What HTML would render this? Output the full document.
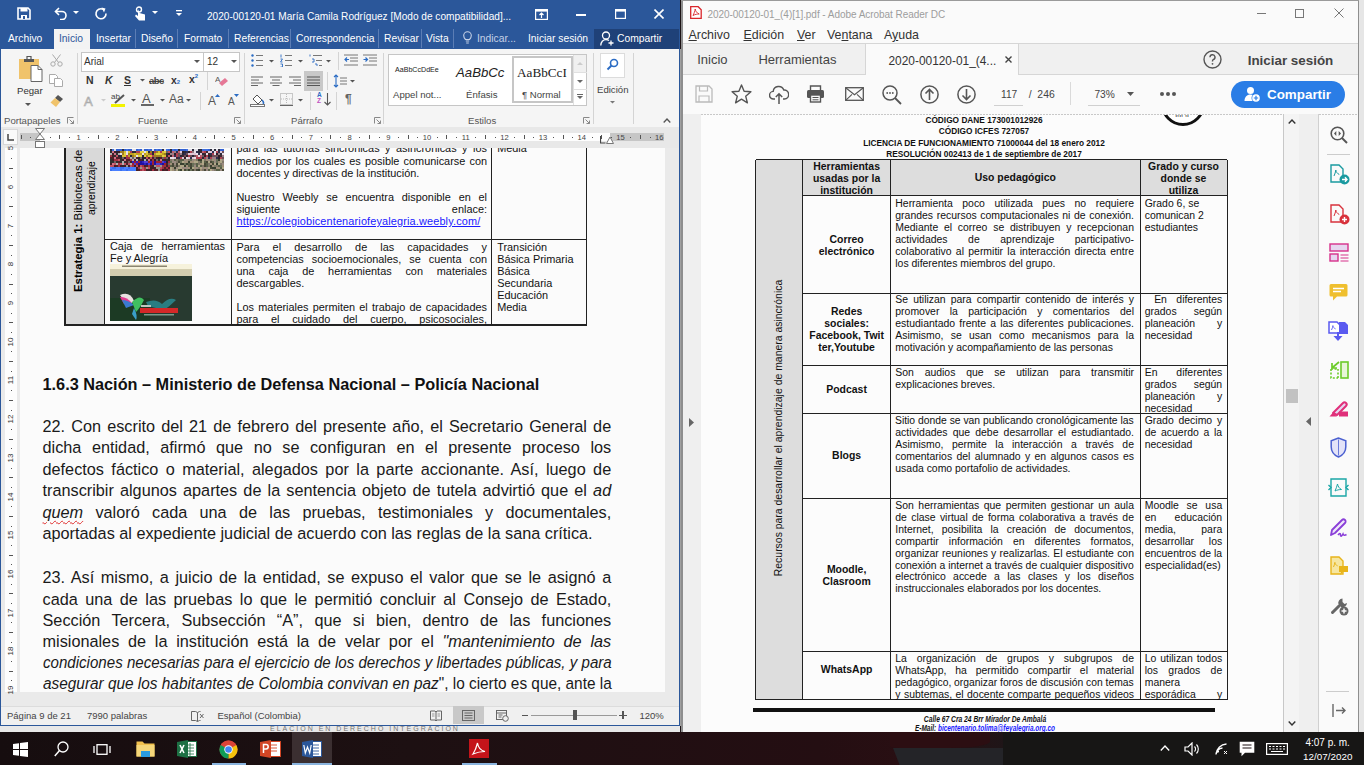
<!DOCTYPE html>
<html><head><meta charset="utf-8">
<style>
*{margin:0;padding:0;box-sizing:border-box}
html,body{width:1364px;height:765px;overflow:hidden;background:#1b1214;font-family:"Liberation Sans",sans-serif}
.a{position:absolute}
.t{position:absolute;white-space:nowrap}
#word{left:0;top:0;width:680px;height:726px;background:#f3f3f3;overflow:hidden}
#wtitle{left:0;top:0;width:680px;height:49px;background:#2b579a}
#ribbon{left:1px;top:49px;width:678px;height:78px;background:#f5f5f5}
#ruler{left:1px;top:127px;width:678px;height:21px;background:#e8e8e8}
#docarea{left:1px;top:148px;width:678px;height:559px;background:#eaeaea;overflow:hidden}
#page{left:19px;top:0;width:645px;height:544px;background:#fbfbfb;overflow:hidden}
#status{left:1px;top:707px;width:678px;height:18px;background:#f0f0f0;font-size:11px;color:#444}
#acro{left:683px;top:0;width:681px;height:732px;background:#fafafa;overflow:hidden}
#taskbar{left:0;top:732px;width:1364px;height:33px;background:#1d1315}
.tab{position:absolute;top:28px;height:20px;font-size:10.3px;color:#fff;line-height:21px;white-space:nowrap}
.sep{position:absolute;width:1px;background:#d4d4d4}
.gl{position:absolute;font-size:11px;color:#555;white-space:nowrap;top:63px}
</style></head><body>

<!-- ================= WORD ================= -->
<div id="word" class="a">
  <div id="wtitle" class="a">
    <div class="t" style="left:207px;top:10.5px;font-size:10.1px;color:#fff">2020-00120-01 María Camila Rodríguez [Modo de compatibilidad]...</div>
    <!-- QAT -->
    <svg class="a" style="left:17px;top:7px" width="14" height="13" viewBox="0 0 14 13"><path d="M1 1h10l2 2v9H1z" fill="none" stroke="#fff" stroke-width="1.6"/><rect x="3.5" y="1" width="7" height="3.5" fill="#fff"/><rect x="4" y="8" width="6" height="4" fill="#fff"/><rect x="6" y="9" width="2" height="3" fill="#2b579a"/></svg>
    <svg class="a" style="left:54px;top:7px" width="14" height="13" viewBox="0 0 14 13"><path d="M5 1L1.5 4.5 5 8" fill="none" stroke="#fff" stroke-width="1.6"/><path d="M2 4.5h6a4 4 0 0 1 0 8h-2" fill="none" stroke="#fff" stroke-width="1.6"/></svg>
    <svg class="a" style="left:73px;top:11px" width="6" height="4"><path d="M0 0h6L3 3z" fill="#fff"/></svg>
    <svg class="a" style="left:94px;top:7px" width="14" height="13" viewBox="0 0 14 13"><path d="M9 2.2A5 5 0 1 0 12 6.5" fill="none" stroke="#fff" stroke-width="1.6"/><path d="M7.5 0.5L11.5 1.5 10 5.5z" fill="#fff"/></svg>
    <svg class="a" style="left:134px;top:6px" width="12" height="15" viewBox="0 0 12 15"><circle cx="5" cy="3.5" r="2.5" fill="none" stroke="#fff" stroke-width="1.4"/><path d="M4 3v7l-2-1.5L1 10l4 4.5h6V8.5L5.5 7" fill="#fff"/></svg>
    <svg class="a" style="left:152px;top:11px" width="6" height="4"><path d="M0 0h6L3 3z" fill="#fff"/></svg>
    <svg class="a" style="left:176px;top:10px" width="6" height="7"><rect x="0" y="0" width="6" height="1.3" fill="#fff"/><path d="M0 3h6L3 6z" fill="#fff"/></svg>
    <!-- window controls -->
    <svg class="a" style="left:535px;top:9px" width="13" height="11" viewBox="0 0 13 11"><rect x="0.6" y="0.6" width="11.8" height="9.8" fill="none" stroke="#fff" stroke-width="1.2"/><rect x="0.6" y="0.6" width="11.8" height="2" fill="#fff"/><path d="M6.5 4v5M4.5 6l2-2 2 2" fill="none" stroke="#fff" stroke-width="1.2"/></svg>
    <div class="a" style="left:576px;top:14px;width:10px;height:1.5px;background:#fff"></div>
    <svg class="a" style="left:615px;top:9px" width="11" height="10" viewBox="0 0 11 10"><rect x="0.6" y="0.6" width="9.8" height="8.8" fill="none" stroke="#fff" stroke-width="1.2"/><rect x="0.6" y="0.6" width="9.8" height="2" fill="#fff"/></svg>
    <svg class="a" style="left:654px;top:9px" width="10" height="10" viewBox="0 0 10 10"><path d="M0.5 0.5l9 9M9.5 0.5l-9 9" stroke="#fff" stroke-width="1.6"/></svg>
    <!-- tabs -->
    <div class="tab" style="left:8px">Archivo</div>
    <div class="a" style="left:54px;top:29px;width:36px;height:20px;background:#f3f3f3"></div>
    <div class="tab" style="left:59px;color:#2b579a">Inicio</div>
    <div class="tab" style="left:96px">Insertar</div>
    <div class="tab" style="left:141px">Diseño</div>
    <div class="tab" style="left:184px">Formato</div>
    <div class="tab" style="left:234px">Referencias</div>
    <div class="tab" style="left:296px">Correspondencia</div>
    <div class="tab" style="left:384px">Revisar</div>
    <div class="tab" style="left:426px">Vista</div>
    <div class="a" style="left:135px;top:29px;width:1px;height:19px;background:#5b7db5"></div>
    <div class="a" style="left:177px;top:29px;width:1px;height:19px;background:#5b7db5"></div>
    <div class="a" style="left:228px;top:29px;width:1px;height:19px;background:#5b7db5"></div>
    <div class="a" style="left:290px;top:29px;width:1px;height:19px;background:#5b7db5"></div>
    <div class="a" style="left:378px;top:29px;width:1px;height:19px;background:#5b7db5"></div>
    <div class="a" style="left:421px;top:29px;width:1px;height:19px;background:#5b7db5"></div>
    <div class="a" style="left:453px;top:29px;width:1px;height:19px;background:#5b7db5"></div>
    <svg class="a" style="left:463px;top:31px" width="9" height="13" viewBox="0 0 9 13"><path d="M2.5 8.5C1 7 0.7 6 0.7 4.5a3.8 3.8 0 0 1 7.6 0c0 1.5-0.3 2.5-1.8 4z M2.8 10h3.4M3.2 12h2.6" fill="none" stroke="#c5d1e6" stroke-width="1.1"/></svg>
    <div class="tab" style="left:477px;color:#c5d1e6">Indicar...</div>
    <div class="tab" style="left:528px">Iniciar sesión</div>
    <div class="a" style="left:594px;top:29px;width:86px;height:20px;background:#1f4178"></div>
    <svg class="a" style="left:600px;top:31px" width="14" height="15" viewBox="0 0 14 15"><circle cx="6" cy="4.5" r="3.5" fill="none" stroke="#fff" stroke-width="1.3"/><path d="M0.8 14.5c0-3.5 2.2-5.8 5.2-5.8 1.2 0 2.2 0.3 3 0.9" fill="none" stroke="#fff" stroke-width="1.3"/><path d="M11 9.5v5M8.5 12h5" stroke="#fff" stroke-width="1.3"/></svg>
    <div class="tab" style="left:617px">Compartir</div>
  </div>
  <div class="a" style="left:0;top:0;width:1px;height:726px;background:#2b579a"></div>
  <div class="a" style="left:679px;top:0;width:1px;height:726px;background:#2b579a"></div>
  <div class="a" style="left:0;top:725px;width:680px;height:1px;background:#2b579a"></div>
  <div id="ribbon" class="a">
    <!-- offsets: ribbon left=1 top=49 -->
    <div style="position:absolute;left:-1px;top:-49px">
    <!-- Portapapeles -->
    <svg class="a" style="left:18px;top:55px" width="26" height="28" viewBox="0 0 26 28"><rect x="1" y="4" width="20" height="20" fill="#f0c36b"/><path d="M6 4h10v3H6z" fill="#555"/><path d="M9 1.5h4v3H9z" fill="none" stroke="#555" stroke-width="1.2"/><path d="M13 10.5h7l4 4V26.5H13z" fill="#fff" stroke="#666" stroke-width="1"/><path d="M20 10.5v4h4" fill="none" stroke="#666" stroke-width="1"/></svg>
    <div class="t" style="left:17px;top:85px;font-size:9.6px;color:#333">Pegar</div>
    <svg class="a" style="left:25px;top:103px" width="6" height="4"><path d="M0 0h6L3 3z" fill="#555"/></svg>
    <svg class="a" style="left:50px;top:54px" width="13" height="13" viewBox="0 0 13 13"><path d="M2.5 0.5l6 8M10.5 0.5l-6 8" stroke="#aaa" stroke-width="1"/><circle cx="3" cy="10" r="2.2" fill="none" stroke="#aaa"/><circle cx="10" cy="10" r="2.2" fill="none" stroke="#aaa"/></svg>
    <svg class="a" style="left:49px;top:74px" width="14" height="13" viewBox="0 0 14 13"><path d="M0.5 0.5h6l2 2v7h-8z" fill="#fff" stroke="#aaa"/><path d="M5.5 4.5h6l2 2v6h-8z" fill="#fff" stroke="#aaa"/></svg>
    <svg class="a" style="left:50px;top:94px" width="14" height="13" viewBox="0 0 14 13"><path d="M8 1l5 4-3 3-5-4z" fill="#555"/><path d="M5 4l5 4-4 5L0.5 8.5z" fill="#f0c36b"/></svg>
    <div class="t" style="left:4px;top:115px;font-size:9.6px;color:#555">Portapapeles</div>
    <svg class="a" style="left:67px;top:117px" width="7" height="7" viewBox="0 0 7 7"><path d="M0.5 6.5v-6h6" fill="none" stroke="#888"/><path d="M2.5 2.5l4 4M6.5 3.5v3h-3" fill="none" stroke="#888"/></svg>
    <div class="sep" style="left:77px;top:53px;height:71px"></div>
    <!-- Fuente -->
    <div class="a" style="left:81px;top:52px;width:159px;height:20px;background:#fff;border:1px solid #c6c6c6"></div>
    <div class="a" style="left:203px;top:53px;width:1px;height:18px;background:#c6c6c6"></div>
    <div class="t" style="left:84px;top:56px;font-size:10px;color:#333">Arial</div>
    <svg class="a" style="left:194px;top:60px" width="6" height="4"><path d="M0 0h6L3 3z" fill="#555"/></svg>
    <div class="t" style="left:207px;top:56px;font-size:10px;color:#333">12</div>
    <svg class="a" style="left:231px;top:60px" width="6" height="4"><path d="M0 0h6L3 3z" fill="#555"/></svg>
    <div class="t" style="left:86px;top:74px;font-size:10.5px;font-weight:bold;color:#333">N</div>
    <div class="t" style="left:105px;top:74px;font-size:10.5px;font-weight:bold;font-style:italic;color:#333">K</div>
    <div class="t" style="left:124px;top:74px;font-size:10.5px;font-weight:bold;color:#333;text-decoration:underline">S</div>
    <svg class="a" style="left:140px;top:79px" width="5" height="3"><path d="M0 0h5L2.5 2.5z" fill="#555"/></svg>
    <div class="t" style="left:149px;top:75px;font-size:9.5px;font-weight:bold;color:#444;letter-spacing:-0.5px;text-decoration:line-through">abc</div>
    <div class="t" style="left:171px;top:74px;font-size:10.5px;font-weight:bold;color:#333">x<span style="font-size:6px;color:#2b6cc4">2</span></div>
    <div class="t" style="left:189px;top:73px;font-size:10.5px;font-weight:bold;color:#333">x<span style="font-size:6px;color:#2b6cc4;vertical-align:5px">2</span></div>
    <div class="sep" style="left:207px;top:72px;height:18px"></div>
    <svg class="a" style="left:215px;top:74px" width="13" height="13" viewBox="0 0 13 13"><text x="0" y="8" font-size="8" fill="#555" font-family="Liberation Sans">A</text><path d="M4 9l6-5 3 3-6 5z" fill="#e57896"/></svg>
    <div class="t" style="left:84px;top:94px;font-size:13px;color:#fff;-webkit-text-stroke:0.7px #aaa">A</div>
    <svg class="a" style="left:101px;top:99px" width="5" height="3"><path d="M0 0h5L2.5 2.5z" fill="#ccc"/></svg>
    <div class="t" style="left:111px;top:92px;font-size:8px;color:#444">ab</div>
    <svg class="a" style="left:113px;top:94px" width="13" height="10" viewBox="0 0 13 10"><path d="M2 9l9-8" stroke="#555" stroke-width="2"/></svg>
    <div class="a" style="left:111px;top:104px;width:14px;height:3px;background:#f3f300"></div>
    <svg class="a" style="left:131px;top:99px" width="5" height="3"><path d="M0 0h5L2.5 2.5z" fill="#555"/></svg>
    <div class="t" style="left:142px;top:91px;font-size:13px;color:#555">A</div>
    <div class="a" style="left:141px;top:104px;width:13px;height:2px;background:#666"></div>
    <svg class="a" style="left:160px;top:99px" width="5" height="3"><path d="M0 0h5L2.5 2.5z" fill="#555"/></svg>
    <div class="t" style="left:169px;top:92px;font-size:12px;color:#555">Aa</div>
    <svg class="a" style="left:186px;top:99px" width="5" height="3"><path d="M0 0h5L2.5 2.5z" fill="#555"/></svg>
    <div class="sep" style="left:200px;top:92px;height:18px"></div>
    <div class="t" style="left:208px;top:94px;font-size:12px;color:#555">A</div>
    <svg class="a" style="left:215px;top:94px" width="5" height="3"><path d="M0 3h5L2.5 0z" fill="#2b6cc4"/></svg>
    <div class="t" style="left:228px;top:96px;font-size:10px;color:#555">A</div>
    <svg class="a" style="left:234px;top:94px" width="5" height="3"><path d="M0 0h5L2.5 3z" fill="#2b6cc4"/></svg>
    <div class="t" style="left:138px;top:115px;font-size:9.6px;color:#555">Fuente</div>
    <svg class="a" style="left:234px;top:117px" width="7" height="7" viewBox="0 0 7 7"><path d="M0.5 6.5v-6h6" fill="none" stroke="#888"/><path d="M2.5 2.5l4 4M6.5 3.5v3h-3" fill="none" stroke="#888"/></svg>
    <div class="sep" style="left:244px;top:53px;height:71px"></div>
    <!-- Parrafo -->
    <svg class="a" style="left:251px;top:54px" width="13" height="13" viewBox="0 0 13 13"><circle cx="1.5" cy="1.5" r="1.2" fill="#2b6cc4"/><circle cx="1.5" cy="6.5" r="1.2" fill="#2b6cc4"/><circle cx="1.5" cy="11.5" r="1.2" fill="#2b6cc4"/><path d="M5 1.5h7M5 6.5h7M5 11.5h7" stroke="#777" stroke-width="1"/></svg>
    <svg class="a" style="left:269px;top:60px" width="5" height="3"><path d="M0 0h5L2.5 2.5z" fill="#555"/></svg>
    <svg class="a" style="left:280px;top:54px" width="13" height="13" viewBox="0 0 13 13"><path d="M1 0.5v3M0.5 5h2l-2 3h2M0.5 10h2v3h-2" fill="none" stroke="#2b6cc4" stroke-width="0.9"/><path d="M5 1.5h7M5 6.5h7M5 11.5h7" stroke="#777" stroke-width="1"/></svg>
    <svg class="a" style="left:298px;top:60px" width="5" height="3"><path d="M0 0h5L2.5 2.5z" fill="#555"/></svg>
    <svg class="a" style="left:309px;top:54px" width="14" height="13" viewBox="0 0 14 13"><path d="M1 0.5v2M3 5h2v3h-2M6 10h2v2" fill="none" stroke="#2b6cc4" stroke-width="0.9"/><path d="M4 1.5h9M7 6.5h6M10 11.5h3" stroke="#777" stroke-width="1"/></svg>
    <svg class="a" style="left:326px;top:60px" width="5" height="3"><path d="M0 0h5L2.5 2.5z" fill="#555"/></svg>
    <div class="sep" style="left:338px;top:52px;height:18px"></div>
    <svg class="a" style="left:344px;top:54px" width="14" height="12" viewBox="0 0 14 12"><path d="M0 1h14M6 4h8M6 7h8M0 11h14" stroke="#777"/><path d="M1 5.5h4M3 3.5l-2 2 2 2" fill="none" stroke="#2b6cc4" stroke-width="1.2"/></svg>
    <svg class="a" style="left:363px;top:54px" width="14" height="12" viewBox="0 0 14 12"><path d="M0 1h14M6 4h8M6 7h8M0 11h14" stroke="#777"/><path d="M0.5 5.5h4M2.5 3.5l2 2-2 2" fill="none" stroke="#2b6cc4" stroke-width="1.2"/></svg>
    <svg class="a" style="left:251px;top:76px" width="12" height="10" viewBox="0 0 12 10"><path d="M0 1h12M0 4h8M0 7h12M0 9.5h7" stroke="#666"/></svg>
    <svg class="a" style="left:270px;top:76px" width="12" height="10" viewBox="0 0 12 10"><path d="M0 1h12M2 4h8M0 7h12M2.5 9.5h7" stroke="#666"/></svg>
    <svg class="a" style="left:289px;top:76px" width="12" height="10" viewBox="0 0 12 10"><path d="M0 1h12M4 4h8M0 7h12M5 9.5h7" stroke="#666"/></svg>
    <div class="a" style="left:304px;top:71px;width:19px;height:20px;background:#c8c8c8"></div>
    <svg class="a" style="left:307px;top:76px" width="13" height="10" viewBox="0 0 13 10"><path d="M0 1h13M0 4h13M0 7h13M0 9.5h13" stroke="#555"/></svg>
    <div class="sep" style="left:327px;top:72px;height:18px"></div>
    <svg class="a" style="left:333px;top:74px" width="14" height="14" viewBox="0 0 14 14"><path d="M3 1v12M1 3l2-2 2 2M1 11l2 2 2-2" fill="none" stroke="#2b6cc4" stroke-width="1.1"/><path d="M7 4h7M7 7h7M7 10h7" stroke="#777"/></svg>
    <svg class="a" style="left:350px;top:80px" width="5" height="3"><path d="M0 0h5L2.5 2.5z" fill="#555"/></svg>
    <svg class="a" style="left:250px;top:93px" width="15" height="14" viewBox="0 0 15 14"><path d="M3 6l4-4 5 5-4 4z" fill="#fff" stroke="#555"/><path d="M12 7c1 1 2 3 1 4" stroke="#2b6cc4" stroke-width="1.5" fill="none"/><rect x="0.5" y="11.5" width="14" height="2" fill="#fff" stroke="#777"/></svg>
    <svg class="a" style="left:269px;top:99px" width="5" height="3"><path d="M0 0h5L2.5 2.5z" fill="#555"/></svg>
    <svg class="a" style="left:280px;top:93px" width="13" height="13" viewBox="0 0 13 13"><rect x="0.5" y="0.5" width="12" height="11" fill="none" stroke="#999" stroke-dasharray="1 1"/><path d="M6.5 1v10M1 6h11" stroke="#bbb" stroke-dasharray="1 1"/><path d="M0 12.5h13" stroke="#666"/></svg>
    <svg class="a" style="left:298px;top:99px" width="5" height="3"><path d="M0 0h5L2.5 2.5z" fill="#555"/></svg>
    <div class="sep" style="left:310px;top:92px;height:18px"></div>
    <div class="t" style="left:317px;top:92px;font-size:6.5px;font-weight:bold;color:#2b6cc4;line-height:6px">A<br><span style="color:#c050c0">Z</span></div>
    <svg class="a" style="left:324px;top:93px" width="7" height="14" viewBox="0 0 7 14"><path d="M3.5 0v12M0.5 9l3 3 3-3" fill="none" stroke="#555" stroke-width="1.1"/></svg>
    <div class="sep" style="left:336px;top:92px;height:18px"></div>
    <div class="t" style="left:345px;top:92px;font-size:12px;font-weight:bold;color:#666">¶</div>
    <div class="t" style="left:291px;top:115px;font-size:9.6px;color:#555">Párrafo</div>
    <svg class="a" style="left:374px;top:117px" width="7" height="7" viewBox="0 0 7 7"><path d="M0.5 6.5v-6h6" fill="none" stroke="#888"/><path d="M2.5 2.5l4 4M6.5 3.5v3h-3" fill="none" stroke="#888"/></svg>
    <div class="sep" style="left:383px;top:53px;height:71px"></div>
    <!-- Estilos -->
    <div class="a" style="left:388px;top:54px;width:199px;height:52px;background:#fff;border:1px solid #c6c6c6"></div>
    <div class="t" style="left:395px;top:66px;font-size:7.1px;color:#222">AaBbCcDdEe</div>
    <div class="t" style="left:456px;top:65px;font-size:13.2px;font-style:italic;color:#222">AaBbCc</div>
    <div class="a" style="left:512px;top:56px;width:61px;height:47px;border:2px solid #c6c6c6"></div>
    <div class="t" style="left:517px;top:65px;font-size:13.2px;font-family:'Liberation Serif',serif;color:#222">AaBbCcI</div>
    <div class="t" style="left:393px;top:89px;font-size:9.6px;color:#444">Appel not...</div>
    <div class="t" style="left:466px;top:89px;font-size:9.6px;color:#444">Énfasis</div>
    <div class="t" style="left:522px;top:89px;font-size:9.6px;color:#444">¶ Normal</div>
    <div class="a" style="left:573px;top:55px;width:1px;height:50px;background:#e0e0e0"></div>
    <div class="a" style="left:574px;top:55px;width:12px;height:17px;background:#f0f0f0"></div>
    <svg class="a" style="left:577px;top:62px" width="6" height="3"><path d="M0 3h6L3 0z" fill="#ccc"/></svg>
    <div class="a" style="left:573px;top:72px;width:14px;height:1px;background:#e0e0e0"></div>
    <svg class="a" style="left:577px;top:80px" width="6" height="3"><path d="M0 0h6L3 3z" fill="#666"/></svg>
    <div class="a" style="left:573px;top:89px;width:14px;height:1px;background:#e0e0e0"></div>
    <svg class="a" style="left:577px;top:94px" width="6" height="6"><path d="M0 0.5h6" stroke="#666"/><path d="M0 2h6L3 5z" fill="#666"/></svg>
    <div class="t" style="left:468px;top:115px;font-size:9.6px;color:#555">Estilos</div>
    <svg class="a" style="left:583px;top:117px" width="7" height="7" viewBox="0 0 7 7"><path d="M0.5 6.5v-6h6" fill="none" stroke="#888"/><path d="M2.5 2.5l4 4M6.5 3.5v3h-3" fill="none" stroke="#888"/></svg>
    <div class="sep" style="left:593px;top:53px;height:71px"></div>
    <!-- Edicion -->
    <div class="a" style="left:600px;top:53px;width:25px;height:25px;background:#fff;border:1px solid #dcdcdc"></div>
    <svg class="a" style="left:606px;top:58px" width="13" height="13" viewBox="0 0 13 13"><circle cx="8" cy="5" r="3.5" fill="none" stroke="#2b6cc4" stroke-width="1.6"/><path d="M5.5 7.5L1.5 11.5" stroke="#2b6cc4" stroke-width="2"/></svg>
    <div class="t" style="left:597px;top:84px;font-size:9.6px;color:#444">Edición</div>
    <svg class="a" style="left:610px;top:101px" width="5" height="3"><path d="M0 0h5L2.5 2.5z" fill="#777"/></svg>
    <div class="sep" style="left:633px;top:53px;height:71px"></div>
    <svg class="a" style="left:663px;top:118px" width="8" height="5" viewBox="0 0 8 5"><path d="M0.7 4.5L4 1l3.3 3.5" fill="none" stroke="#555" stroke-width="1.3"/></svg>
    </div>
  </div>
  <div id="ruler" class="a">
<div style="position:absolute;left:-1px;top:-127px">
<div class="a" style="left:3px;top:129px;width:15px;height:16px;background:#fafafa;border:1px solid #d8d8d8"></div>
<svg class="a" style="left:7px;top:134px" width="7" height="7"><path d="M1 0v6h6" fill="none" stroke="#444" stroke-width="1.5"/></svg>
<div class="a" style="left:20px;top:133px;width:644px;height:8px;background:#fdfdfd"></div>
<div class="a" style="left:20px;top:133px;width:20px;height:8px;background:#c6c6c6"></div>
<div class="a" style="left:610px;top:133px;width:54px;height:8px;background:#c6c6c6"></div>
<div class="a" style="left:49.7px;top:137px;width:1px;height:1px;background:#555"></div>
<div class="a" style="left:59.4px;top:135px;width:1px;height:4px;background:#555"></div>
<div class="a" style="left:69.0px;top:137px;width:1px;height:1px;background:#555"></div>
<div class="t" style="left:68.7px;top:132.5px;width:20px;text-align:center;font-size:7.6px;line-height:9px;color:#444">1</div>
<div class="a" style="left:88.4px;top:137px;width:1px;height:1px;background:#555"></div>
<div class="a" style="left:98.1px;top:135px;width:1px;height:4px;background:#555"></div>
<div class="a" style="left:107.7px;top:137px;width:1px;height:1px;background:#555"></div>
<div class="t" style="left:107.4px;top:132.5px;width:20px;text-align:center;font-size:7.6px;line-height:9px;color:#444">2</div>
<div class="a" style="left:127.1px;top:137px;width:1px;height:1px;background:#555"></div>
<div class="a" style="left:136.8px;top:135px;width:1px;height:4px;background:#555"></div>
<div class="a" style="left:146.4px;top:137px;width:1px;height:1px;background:#555"></div>
<div class="t" style="left:146.1px;top:132.5px;width:20px;text-align:center;font-size:7.6px;line-height:9px;color:#444">3</div>
<div class="a" style="left:165.8px;top:137px;width:1px;height:1px;background:#555"></div>
<div class="a" style="left:175.5px;top:135px;width:1px;height:4px;background:#555"></div>
<div class="a" style="left:185.1px;top:137px;width:1px;height:1px;background:#555"></div>
<div class="t" style="left:184.8px;top:132.5px;width:20px;text-align:center;font-size:7.6px;line-height:9px;color:#444">4</div>
<div class="a" style="left:204.5px;top:137px;width:1px;height:1px;background:#555"></div>
<div class="a" style="left:214.2px;top:135px;width:1px;height:4px;background:#555"></div>
<div class="a" style="left:223.8px;top:137px;width:1px;height:1px;background:#555"></div>
<div class="t" style="left:223.5px;top:132.5px;width:20px;text-align:center;font-size:7.6px;line-height:9px;color:#444">5</div>
<div class="a" style="left:243.2px;top:137px;width:1px;height:1px;background:#555"></div>
<div class="a" style="left:252.8px;top:135px;width:1px;height:4px;background:#555"></div>
<div class="a" style="left:262.5px;top:137px;width:1px;height:1px;background:#555"></div>
<div class="t" style="left:262.2px;top:132.5px;width:20px;text-align:center;font-size:7.6px;line-height:9px;color:#444">6</div>
<div class="a" style="left:281.9px;top:137px;width:1px;height:1px;background:#555"></div>
<div class="a" style="left:291.6px;top:135px;width:1px;height:4px;background:#555"></div>
<div class="a" style="left:301.2px;top:137px;width:1px;height:1px;background:#555"></div>
<div class="t" style="left:300.9px;top:132.5px;width:20px;text-align:center;font-size:7.6px;line-height:9px;color:#444">7</div>
<div class="a" style="left:320.6px;top:137px;width:1px;height:1px;background:#555"></div>
<div class="a" style="left:330.3px;top:135px;width:1px;height:4px;background:#555"></div>
<div class="a" style="left:339.9px;top:137px;width:1px;height:1px;background:#555"></div>
<div class="t" style="left:339.6px;top:132.5px;width:20px;text-align:center;font-size:7.6px;line-height:9px;color:#444">8</div>
<div class="a" style="left:359.3px;top:137px;width:1px;height:1px;background:#555"></div>
<div class="a" style="left:369.0px;top:135px;width:1px;height:4px;background:#555"></div>
<div class="a" style="left:378.6px;top:137px;width:1px;height:1px;background:#555"></div>
<div class="t" style="left:378.3px;top:132.5px;width:20px;text-align:center;font-size:7.6px;line-height:9px;color:#444">9</div>
<div class="a" style="left:398.0px;top:137px;width:1px;height:1px;background:#555"></div>
<div class="a" style="left:407.7px;top:135px;width:1px;height:4px;background:#555"></div>
<div class="a" style="left:417.3px;top:137px;width:1px;height:1px;background:#555"></div>
<div class="t" style="left:417.0px;top:132.5px;width:20px;text-align:center;font-size:7.6px;line-height:9px;color:#444">10</div>
<div class="a" style="left:436.7px;top:137px;width:1px;height:1px;background:#555"></div>
<div class="a" style="left:446.4px;top:135px;width:1px;height:4px;background:#555"></div>
<div class="a" style="left:456.0px;top:137px;width:1px;height:1px;background:#555"></div>
<div class="t" style="left:455.7px;top:132.5px;width:20px;text-align:center;font-size:7.6px;line-height:9px;color:#444">11</div>
<div class="a" style="left:475.4px;top:137px;width:1px;height:1px;background:#555"></div>
<div class="a" style="left:485.1px;top:135px;width:1px;height:4px;background:#555"></div>
<div class="a" style="left:494.7px;top:137px;width:1px;height:1px;background:#555"></div>
<div class="t" style="left:494.4px;top:132.5px;width:20px;text-align:center;font-size:7.6px;line-height:9px;color:#444">12</div>
<div class="a" style="left:514.1px;top:137px;width:1px;height:1px;background:#555"></div>
<div class="a" style="left:523.8px;top:135px;width:1px;height:4px;background:#555"></div>
<div class="a" style="left:533.4px;top:137px;width:1px;height:1px;background:#555"></div>
<div class="t" style="left:533.1px;top:132.5px;width:20px;text-align:center;font-size:7.6px;line-height:9px;color:#444">13</div>
<div class="a" style="left:552.8px;top:137px;width:1px;height:1px;background:#555"></div>
<div class="a" style="left:562.5px;top:135px;width:1px;height:4px;background:#555"></div>
<div class="a" style="left:572.1px;top:137px;width:1px;height:1px;background:#555"></div>
<div class="t" style="left:571.8px;top:132.5px;width:20px;text-align:center;font-size:7.6px;line-height:9px;color:#444">14</div>
<div class="a" style="left:591.5px;top:137px;width:1px;height:1px;background:#555"></div>
<div class="a" style="left:601.2px;top:135px;width:1px;height:4px;background:#555"></div>
<div class="a" style="left:610.8px;top:137px;width:1px;height:1px;background:#555"></div>
<div class="t" style="left:610.5px;top:132.5px;width:20px;text-align:center;font-size:7.6px;line-height:9px;color:#444">15</div>
<div class="a" style="left:630.2px;top:137px;width:1px;height:1px;background:#555"></div>
<div class="a" style="left:639.9px;top:135px;width:1px;height:4px;background:#555"></div>
<div class="a" style="left:649.5px;top:137px;width:1px;height:1px;background:#555"></div>
<div class="t" style="left:649.2px;top:132.5px;width:20px;text-align:center;font-size:7.6px;line-height:9px;color:#444">16</div>
<div class="a" style="left:21px;top:135px;width:1px;height:4px;background:#555"></div>
<div class="a" style="left:30px;top:137px;width:1px;height:1px;background:#555"></div>
<svg class="a" style="left:35px;top:128px" width="10" height="20" viewBox="0 0 10 20"><path d="M0.5 0.5h9L5 6z M0.5 11.5h9L5 6z" fill="#fff" stroke="#777"/><rect x="0.5" y="13.5" width="9" height="6" fill="#fff" stroke="#777"/></svg>
<svg class="a" style="left:600px;top:136px" width="20" height="12" viewBox="0 0 20 12"><path d="M0.5 0v7h5" fill="none" stroke="#444" stroke-width="1.2"/><path d="M6.5 7.5h7L10 1z" fill="#fff" stroke="#777"/></svg>
</div></div>
  <div id="docarea" class="a">
    <div id="page" class="a"><div style="position:absolute;left:-20px;top:-148px">
<div class="a" style="left:65px;top:148px;width:39px;height:177px;background:#d9d9d9"></div>
<div class="a" style="left:64.0px;top:148.0px;width:1.6px;height:178.0px;background:#222"></div>
<div class="a" style="left:104.0px;top:148.0px;width:1.3px;height:178.0px;background:#222"></div>
<div class="a" style="left:231.0px;top:148.0px;width:1.3px;height:178.0px;background:#222"></div>
<div class="a" style="left:491.0px;top:148.0px;width:1.3px;height:178.0px;background:#222"></div>
<div class="a" style="left:585.5px;top:148.0px;width:1.6px;height:178.0px;background:#222"></div>
<div class="a" style="left:104.0px;top:239.0px;width:483.0px;height:1.3px;background:#222"></div>
<div class="a" style="left:64.0px;top:324.0px;width:523.0px;height:1.6px;background:#222"></div>
<div class="t" style="left:78px;top:291.5px;transform-origin:0 0;transform:rotate(-90deg);font-size:11.4px;line-height:14px;"><span style="position:absolute;left:0;top:-7px;white-space:nowrap"><b>Estrategia 1:</b> Bibliotecas de m</span></div>
<div class="t" style="left:84.5px;top:214.5px;transform-origin:0 0;transform:rotate(-90deg);font-size:10.4px;line-height:14px;"><span style="position:absolute;left:0;top:0;white-space:nowrap">aprendizaje</span></div>
<svg class="a" style="left:110px;top:149px" width="114" height="22" viewBox="0 0 114 22" shape-rendering="crispEdges"><rect x="0" y="0" width="2" height="2" fill="#2a2a3a"/><rect x="2" y="0" width="2" height="2" fill="#4070e0"/><rect x="4" y="0" width="2" height="2" fill="#e0e0e8"/><rect x="6" y="0" width="2" height="2" fill="#3060d0"/><rect x="8" y="0" width="2" height="2" fill="#3060d0"/><rect x="10" y="0" width="2" height="2" fill="#3060d0"/><rect x="12" y="0" width="2" height="2" fill="#2a2a3a"/><rect x="14" y="0" width="2" height="2" fill="#3060d0"/><rect x="16" y="0" width="2" height="2" fill="#4070e0"/><rect x="18" y="0" width="2" height="2" fill="#3060d0"/><rect x="20" y="0" width="2" height="2" fill="#3060d0"/><rect x="22" y="0" width="2" height="2" fill="#e0e0e8"/><rect x="24" y="0" width="2" height="2" fill="#e0e0e8"/><rect x="26" y="0" width="2" height="2" fill="#3060d0"/><rect x="28" y="0" width="2" height="2" fill="#4070e0"/><rect x="30" y="0" width="2" height="2" fill="#3060d0"/><rect x="32" y="0" width="2" height="2" fill="#e0e0e8"/><rect x="34" y="0" width="2" height="2" fill="#3060d0"/><rect x="36" y="0" width="2" height="2" fill="#3060d0"/><rect x="38" y="0" width="2" height="2" fill="#4070e0"/><rect x="40" y="0" width="2" height="2" fill="#3060d0"/><rect x="42" y="0" width="2" height="2" fill="#e0e0e8"/><rect x="44" y="0" width="2" height="2" fill="#3060d0"/><rect x="46" y="0" width="2" height="2" fill="#4070e0"/><rect x="48" y="0" width="2" height="2" fill="#3060d0"/><rect x="50" y="0" width="2" height="2" fill="#4070e0"/><rect x="52" y="0" width="2" height="2" fill="#2a2a3a"/><rect x="54" y="0" width="2" height="2" fill="#e0e0e8"/><rect x="56" y="0" width="2" height="2" fill="#4070e0"/><rect x="58" y="0" width="2" height="2" fill="#3060d0"/><rect x="60" y="0" width="2" height="2" fill="#2a2a3a"/><rect x="62" y="0" width="2" height="2" fill="#4070e0"/><rect x="64" y="0" width="2" height="2" fill="#3060d0"/><rect x="66" y="0" width="2" height="2" fill="#4070e0"/><rect x="68" y="0" width="2" height="2" fill="#2a2a3a"/><rect x="70" y="0" width="2" height="2" fill="#3060d0"/><rect x="72" y="0" width="2" height="2" fill="#3060d0"/><rect x="74" y="0" width="2" height="2" fill="#3060d0"/><rect x="76" y="0" width="2" height="2" fill="#4070e0"/><rect x="78" y="0" width="2" height="2" fill="#e0e0e8"/><rect x="80" y="0" width="2" height="2" fill="#e0e0e8"/><rect x="82" y="0" width="2" height="2" fill="#2a2a3a"/><rect x="84" y="0" width="2" height="2" fill="#e0e0e8"/><rect x="86" y="0" width="2" height="2" fill="#e0e0e8"/><rect x="88" y="0" width="2" height="2" fill="#2a2a3a"/><rect x="90" y="0" width="2" height="2" fill="#2a2a3a"/><rect x="92" y="0" width="2" height="2" fill="#4070e0"/><rect x="94" y="0" width="2" height="2" fill="#4070e0"/><rect x="96" y="0" width="2" height="2" fill="#4070e0"/><rect x="98" y="0" width="2" height="2" fill="#3060d0"/><rect x="100" y="0" width="2" height="2" fill="#2a2a3a"/><rect x="102" y="0" width="2" height="2" fill="#e0e0e8"/><rect x="104" y="0" width="2" height="2" fill="#2a2a3a"/><rect x="106" y="0" width="2" height="2" fill="#e0e0e8"/><rect x="108" y="0" width="2" height="2" fill="#2a2a3a"/><rect x="110" y="0" width="2" height="2" fill="#3060d0"/><rect x="112" y="0" width="2" height="2" fill="#3060d0"/><rect x="0" y="2" width="2" height="2" fill="#303030"/><rect x="2" y="2" width="2" height="2" fill="#d07088"/><rect x="4" y="2" width="2" height="2" fill="#402028"/><rect x="6" y="2" width="2" height="2" fill="#2a2030"/><rect x="8" y="2" width="2" height="2" fill="#402028"/><rect x="10" y="2" width="2" height="2" fill="#a08020"/><rect x="12" y="2" width="2" height="2" fill="#a08020"/><rect x="14" y="2" width="2" height="2" fill="#d8c030"/><rect x="16" y="2" width="2" height="2" fill="#e8e0e8"/><rect x="18" y="2" width="2" height="2" fill="#d8c030"/><rect x="20" y="2" width="2" height="2" fill="#b04050"/><rect x="22" y="2" width="2" height="2" fill="#2a2a3a"/><rect x="24" y="2" width="2" height="2" fill="#2a2a3a"/><rect x="26" y="2" width="2" height="2" fill="#b04050"/><rect x="28" y="2" width="2" height="2" fill="#b04050"/><rect x="30" y="2" width="2" height="2" fill="#e0d040"/><rect x="32" y="2" width="2" height="2" fill="#e0d040"/><rect x="34" y="2" width="2" height="2" fill="#e8e0e8"/><rect x="36" y="2" width="2" height="2" fill="#e0d040"/><rect x="38" y="2" width="2" height="2" fill="#2a2a3a"/><rect x="40" y="2" width="2" height="2" fill="#a08020"/><rect x="42" y="2" width="2" height="2" fill="#2a2a3a"/><rect x="44" y="2" width="2" height="2" fill="#b04050"/><rect x="46" y="2" width="2" height="2" fill="#a08020"/><rect x="48" y="2" width="2" height="2" fill="#d8c030"/><rect x="50" y="2" width="2" height="2" fill="#b04050"/><rect x="52" y="2" width="2" height="2" fill="#d8c030"/><rect x="54" y="2" width="2" height="2" fill="#e0d040"/><rect x="56" y="2" width="2" height="2" fill="#706060"/><rect x="58" y="2" width="2" height="2" fill="#c05060"/><rect x="60" y="2" width="2" height="2" fill="#2a2a3a"/><rect x="62" y="2" width="2" height="2" fill="#c06070"/><rect x="64" y="2" width="2" height="2" fill="#9a8088"/><rect x="66" y="2" width="2" height="2" fill="#303050"/><rect x="68" y="2" width="2" height="2" fill="#c06070"/><rect x="70" y="2" width="2" height="2" fill="#e0c8d8"/><rect x="72" y="2" width="2" height="2" fill="#302028"/><rect x="74" y="2" width="2" height="2" fill="#2a2a3a"/><rect x="76" y="2" width="2" height="2" fill="#303050"/><rect x="78" y="2" width="2" height="2" fill="#302028"/><rect x="80" y="2" width="2" height="2" fill="#b04050"/><rect x="82" y="2" width="2" height="2" fill="#9a8088"/><rect x="84" y="2" width="2" height="2" fill="#e8e0e8"/><rect x="86" y="2" width="2" height="2" fill="#303050"/><rect x="88" y="2" width="2" height="2" fill="#2a2a3a"/><rect x="90" y="2" width="2" height="2" fill="#402830"/><rect x="92" y="2" width="2" height="2" fill="#c06070"/><rect x="94" y="2" width="2" height="2" fill="#b04050"/><rect x="96" y="2" width="2" height="2" fill="#402830"/><rect x="98" y="2" width="2" height="2" fill="#e0c8d8"/><rect x="100" y="2" width="2" height="2" fill="#e0c8d8"/><rect x="102" y="2" width="2" height="2" fill="#303050"/><rect x="104" y="2" width="2" height="2" fill="#e8e0e8"/><rect x="106" y="2" width="2" height="2" fill="#b04050"/><rect x="108" y="2" width="2" height="2" fill="#303050"/><rect x="110" y="2" width="2" height="2" fill="#e0c8d8"/><rect x="112" y="2" width="2" height="2" fill="#705058"/><rect x="0" y="4" width="2" height="2" fill="#b0b0b0"/><rect x="2" y="4" width="2" height="2" fill="#402028"/><rect x="4" y="4" width="2" height="2" fill="#d07088"/><rect x="6" y="4" width="2" height="2" fill="#303030"/><rect x="8" y="4" width="2" height="2" fill="#b0b0b0"/><rect x="10" y="4" width="2" height="2" fill="#e8e0e8"/><rect x="12" y="4" width="2" height="2" fill="#a08020"/><rect x="14" y="4" width="2" height="2" fill="#e0d040"/><rect x="16" y="4" width="2" height="2" fill="#e8e0e8"/><rect x="18" y="4" width="2" height="2" fill="#a08020"/><rect x="20" y="4" width="2" height="2" fill="#c0a020"/><rect x="22" y="4" width="2" height="2" fill="#c0a020"/><rect x="24" y="4" width="2" height="2" fill="#d8c030"/><rect x="26" y="4" width="2" height="2" fill="#c0a020"/><rect x="28" y="4" width="2" height="2" fill="#c0a020"/><rect x="30" y="4" width="2" height="2" fill="#c0a020"/><rect x="32" y="4" width="2" height="2" fill="#e8e0e8"/><rect x="34" y="4" width="2" height="2" fill="#c0a020"/><rect x="36" y="4" width="2" height="2" fill="#d8c030"/><rect x="38" y="4" width="2" height="2" fill="#a08020"/><rect x="40" y="4" width="2" height="2" fill="#b04050"/><rect x="42" y="4" width="2" height="2" fill="#2a2a3a"/><rect x="44" y="4" width="2" height="2" fill="#c0a020"/><rect x="46" y="4" width="2" height="2" fill="#e0d040"/><rect x="48" y="4" width="2" height="2" fill="#e0d040"/><rect x="50" y="4" width="2" height="2" fill="#d8c030"/><rect x="52" y="4" width="2" height="2" fill="#c0a020"/><rect x="54" y="4" width="2" height="2" fill="#a08020"/><rect x="56" y="4" width="2" height="2" fill="#303030"/><rect x="58" y="4" width="2" height="2" fill="#2a2030"/><rect x="60" y="4" width="2" height="2" fill="#9a8088"/><rect x="62" y="4" width="2" height="2" fill="#9a8088"/><rect x="64" y="4" width="2" height="2" fill="#302028"/><rect x="66" y="4" width="2" height="2" fill="#b04050"/><rect x="68" y="4" width="2" height="2" fill="#705058"/><rect x="70" y="4" width="2" height="2" fill="#9a8088"/><rect x="72" y="4" width="2" height="2" fill="#2a2a3a"/><rect x="74" y="4" width="2" height="2" fill="#303050"/><rect x="76" y="4" width="2" height="2" fill="#705058"/><rect x="78" y="4" width="2" height="2" fill="#e0c8d8"/><rect x="80" y="4" width="2" height="2" fill="#e0c8d8"/><rect x="82" y="4" width="2" height="2" fill="#e0c8d8"/><rect x="84" y="4" width="2" height="2" fill="#e0c8d8"/><rect x="86" y="4" width="2" height="2" fill="#e8e0e8"/><rect x="88" y="4" width="2" height="2" fill="#303050"/><rect x="90" y="4" width="2" height="2" fill="#e0c8d8"/><rect x="92" y="4" width="2" height="2" fill="#2a2a3a"/><rect x="94" y="4" width="2" height="2" fill="#402830"/><rect x="96" y="4" width="2" height="2" fill="#e8e0e8"/><rect x="98" y="4" width="2" height="2" fill="#402830"/><rect x="100" y="4" width="2" height="2" fill="#303050"/><rect x="102" y="4" width="2" height="2" fill="#b04050"/><rect x="104" y="4" width="2" height="2" fill="#e8e0e8"/><rect x="106" y="4" width="2" height="2" fill="#302028"/><rect x="108" y="4" width="2" height="2" fill="#9a8088"/><rect x="110" y="4" width="2" height="2" fill="#2a2a3a"/><rect x="112" y="4" width="2" height="2" fill="#e8e0e8"/><rect x="0" y="6" width="2" height="2" fill="#a03040"/><rect x="2" y="6" width="2" height="2" fill="#402028"/><rect x="4" y="6" width="2" height="2" fill="#303030"/><rect x="6" y="6" width="2" height="2" fill="#c05060"/><rect x="8" y="6" width="2" height="2" fill="#2a2030"/><rect x="10" y="6" width="2" height="2" fill="#2a2a3a"/><rect x="12" y="6" width="2" height="2" fill="#d8c030"/><rect x="14" y="6" width="2" height="2" fill="#d8c030"/><rect x="16" y="6" width="2" height="2" fill="#b04050"/><rect x="18" y="6" width="2" height="2" fill="#c0a020"/><rect x="20" y="6" width="2" height="2" fill="#2a2a3a"/><rect x="22" y="6" width="2" height="2" fill="#a08020"/><rect x="24" y="6" width="2" height="2" fill="#c0a020"/><rect x="26" y="6" width="2" height="2" fill="#e8e0e8"/><rect x="28" y="6" width="2" height="2" fill="#e0d040"/><rect x="30" y="6" width="2" height="2" fill="#e0d040"/><rect x="32" y="6" width="2" height="2" fill="#2a2a3a"/><rect x="34" y="6" width="2" height="2" fill="#e0d040"/><rect x="36" y="6" width="2" height="2" fill="#a08020"/><rect x="38" y="6" width="2" height="2" fill="#d8c030"/><rect x="40" y="6" width="2" height="2" fill="#d8c030"/><rect x="42" y="6" width="2" height="2" fill="#b04050"/><rect x="44" y="6" width="2" height="2" fill="#a08020"/><rect x="46" y="6" width="2" height="2" fill="#a08020"/><rect x="48" y="6" width="2" height="2" fill="#a08020"/><rect x="50" y="6" width="2" height="2" fill="#a08020"/><rect x="52" y="6" width="2" height="2" fill="#e0d040"/><rect x="54" y="6" width="2" height="2" fill="#d8c030"/><rect x="56" y="6" width="2" height="2" fill="#402028"/><rect x="58" y="6" width="2" height="2" fill="#c05060"/><rect x="60" y="6" width="2" height="2" fill="#302028"/><rect x="62" y="6" width="2" height="2" fill="#c06070"/><rect x="64" y="6" width="2" height="2" fill="#303050"/><rect x="66" y="6" width="2" height="2" fill="#b04050"/><rect x="68" y="6" width="2" height="2" fill="#705058"/><rect x="70" y="6" width="2" height="2" fill="#2a2a3a"/><rect x="72" y="6" width="2" height="2" fill="#402830"/><rect x="74" y="6" width="2" height="2" fill="#705058"/><rect x="76" y="6" width="2" height="2" fill="#302028"/><rect x="78" y="6" width="2" height="2" fill="#b04050"/><rect x="80" y="6" width="2" height="2" fill="#705058"/><rect x="82" y="6" width="2" height="2" fill="#2a2a3a"/><rect x="84" y="6" width="2" height="2" fill="#705058"/><rect x="86" y="6" width="2" height="2" fill="#c06070"/><rect x="88" y="6" width="2" height="2" fill="#e8e0e8"/><rect x="90" y="6" width="2" height="2" fill="#c06070"/><rect x="92" y="6" width="2" height="2" fill="#705058"/><rect x="94" y="6" width="2" height="2" fill="#302028"/><rect x="96" y="6" width="2" height="2" fill="#b04050"/><rect x="98" y="6" width="2" height="2" fill="#302028"/><rect x="100" y="6" width="2" height="2" fill="#402830"/><rect x="102" y="6" width="2" height="2" fill="#705058"/><rect x="104" y="6" width="2" height="2" fill="#705058"/><rect x="106" y="6" width="2" height="2" fill="#705058"/><rect x="108" y="6" width="2" height="2" fill="#302028"/><rect x="110" y="6" width="2" height="2" fill="#402830"/><rect x="112" y="6" width="2" height="2" fill="#9a8088"/><rect x="0" y="8" width="2" height="2" fill="#502028"/><rect x="2" y="8" width="2" height="2" fill="#502028"/><rect x="4" y="8" width="2" height="2" fill="#d07088"/><rect x="6" y="8" width="2" height="2" fill="#502028"/><rect x="8" y="8" width="2" height="2" fill="#502028"/><rect x="10" y="8" width="2" height="2" fill="#303030"/><rect x="12" y="8" width="2" height="2" fill="#706060"/><rect x="14" y="8" width="2" height="2" fill="#2a2030"/><rect x="16" y="8" width="2" height="2" fill="#a03040"/><rect x="18" y="8" width="2" height="2" fill="#a03040"/><rect x="20" y="8" width="2" height="2" fill="#b0b0b0"/><rect x="22" y="8" width="2" height="2" fill="#706060"/><rect x="24" y="8" width="2" height="2" fill="#b0b0b0"/><rect x="26" y="8" width="2" height="2" fill="#502028"/><rect x="28" y="8" width="2" height="2" fill="#2a2030"/><rect x="30" y="8" width="2" height="2" fill="#706060"/><rect x="32" y="8" width="2" height="2" fill="#2a2030"/><rect x="34" y="8" width="2" height="2" fill="#2a2030"/><rect x="36" y="8" width="2" height="2" fill="#c05060"/><rect x="38" y="8" width="2" height="2" fill="#502028"/><rect x="40" y="8" width="2" height="2" fill="#c05060"/><rect x="42" y="8" width="2" height="2" fill="#502028"/><rect x="44" y="8" width="2" height="2" fill="#706060"/><rect x="46" y="8" width="2" height="2" fill="#502028"/><rect x="48" y="8" width="2" height="2" fill="#2a2030"/><rect x="50" y="8" width="2" height="2" fill="#502028"/><rect x="52" y="8" width="2" height="2" fill="#706060"/><rect x="54" y="8" width="2" height="2" fill="#a03040"/><rect x="56" y="8" width="2" height="2" fill="#706060"/><rect x="58" y="8" width="2" height="2" fill="#2a2030"/><rect x="60" y="8" width="2" height="2" fill="#e8e0e8"/><rect x="62" y="8" width="2" height="2" fill="#e8e0e8"/><rect x="64" y="8" width="2" height="2" fill="#e0c8d8"/><rect x="66" y="8" width="2" height="2" fill="#402830"/><rect x="68" y="8" width="2" height="2" fill="#303050"/><rect x="70" y="8" width="2" height="2" fill="#b04050"/><rect x="72" y="8" width="2" height="2" fill="#e0c8d8"/><rect x="74" y="8" width="2" height="2" fill="#302028"/><rect x="76" y="8" width="2" height="2" fill="#e8e0e8"/><rect x="78" y="8" width="2" height="2" fill="#e0c8d8"/><rect x="80" y="8" width="2" height="2" fill="#303050"/><rect x="82" y="8" width="2" height="2" fill="#e0c8d8"/><rect x="84" y="8" width="2" height="2" fill="#e8e0e8"/><rect x="86" y="8" width="2" height="2" fill="#b04050"/><rect x="88" y="8" width="2" height="2" fill="#b04050"/><rect x="90" y="8" width="2" height="2" fill="#b04050"/><rect x="92" y="8" width="2" height="2" fill="#2a2a3a"/><rect x="94" y="8" width="2" height="2" fill="#b04050"/><rect x="96" y="8" width="2" height="2" fill="#9a8088"/><rect x="98" y="8" width="2" height="2" fill="#303050"/><rect x="100" y="8" width="2" height="2" fill="#b04050"/><rect x="102" y="8" width="2" height="2" fill="#9a8088"/><rect x="104" y="8" width="2" height="2" fill="#9a8088"/><rect x="106" y="8" width="2" height="2" fill="#303050"/><rect x="108" y="8" width="2" height="2" fill="#302028"/><rect x="110" y="8" width="2" height="2" fill="#b04050"/><rect x="112" y="8" width="2" height="2" fill="#705058"/><rect x="0" y="10" width="2" height="2" fill="#303030"/><rect x="2" y="10" width="2" height="2" fill="#402028"/><rect x="4" y="10" width="2" height="2" fill="#a03040"/><rect x="6" y="10" width="2" height="2" fill="#a03040"/><rect x="8" y="10" width="2" height="2" fill="#c05060"/><rect x="10" y="10" width="2" height="2" fill="#303030"/><rect x="12" y="10" width="2" height="2" fill="#402028"/><rect x="14" y="10" width="2" height="2" fill="#d07088"/><rect x="16" y="10" width="2" height="2" fill="#502028"/><rect x="18" y="10" width="2" height="2" fill="#502028"/><rect x="20" y="10" width="2" height="2" fill="#a03040"/><rect x="22" y="10" width="2" height="2" fill="#b0b0b0"/><rect x="24" y="10" width="2" height="2" fill="#502028"/><rect x="26" y="10" width="2" height="2" fill="#b0b0b0"/><rect x="28" y="10" width="2" height="2" fill="#303030"/><rect x="30" y="10" width="2" height="2" fill="#502028"/><rect x="32" y="10" width="2" height="2" fill="#2a2030"/><rect x="34" y="10" width="2" height="2" fill="#b0b0b0"/><rect x="36" y="10" width="2" height="2" fill="#303030"/><rect x="38" y="10" width="2" height="2" fill="#d07088"/><rect x="40" y="10" width="2" height="2" fill="#402028"/><rect x="42" y="10" width="2" height="2" fill="#a03040"/><rect x="44" y="10" width="2" height="2" fill="#2a2030"/><rect x="46" y="10" width="2" height="2" fill="#706060"/><rect x="48" y="10" width="2" height="2" fill="#303030"/><rect x="50" y="10" width="2" height="2" fill="#d07088"/><rect x="52" y="10" width="2" height="2" fill="#303030"/><rect x="54" y="10" width="2" height="2" fill="#402028"/><rect x="56" y="10" width="2" height="2" fill="#303030"/><rect x="58" y="10" width="2" height="2" fill="#402028"/><rect x="60" y="10" width="2" height="2" fill="#807868"/><rect x="62" y="10" width="2" height="2" fill="#9a8a80"/><rect x="64" y="10" width="2" height="2" fill="#586048"/><rect x="66" y="10" width="2" height="2" fill="#807868"/><rect x="68" y="10" width="2" height="2" fill="#586048"/><rect x="70" y="10" width="2" height="2" fill="#586048"/><rect x="72" y="10" width="2" height="2" fill="#586048"/><rect x="74" y="10" width="2" height="2" fill="#9a8a80"/><rect x="76" y="10" width="2" height="2" fill="#a09078"/><rect x="78" y="10" width="2" height="2" fill="#807868"/><rect x="80" y="10" width="2" height="2" fill="#687058"/><rect x="82" y="10" width="2" height="2" fill="#9a8a80"/><rect x="84" y="10" width="2" height="2" fill="#a09078"/><rect x="86" y="10" width="2" height="2" fill="#807868"/><rect x="88" y="10" width="2" height="2" fill="#384030"/><rect x="90" y="10" width="2" height="2" fill="#384030"/><rect x="92" y="10" width="2" height="2" fill="#b0a888"/><rect x="94" y="10" width="2" height="2" fill="#807868"/><rect x="96" y="10" width="2" height="2" fill="#a09078"/><rect x="98" y="10" width="2" height="2" fill="#9a8a80"/><rect x="100" y="10" width="2" height="2" fill="#807868"/><rect x="102" y="10" width="2" height="2" fill="#a09078"/><rect x="104" y="10" width="2" height="2" fill="#9a8a80"/><rect x="106" y="10" width="2" height="2" fill="#687058"/><rect x="108" y="10" width="2" height="2" fill="#384030"/><rect x="110" y="10" width="2" height="2" fill="#b0a888"/><rect x="112" y="10" width="2" height="2" fill="#9a8a80"/><rect x="0" y="12" width="2" height="2" fill="#303030"/><rect x="2" y="12" width="2" height="2" fill="#303030"/><rect x="4" y="12" width="2" height="2" fill="#706060"/><rect x="6" y="12" width="2" height="2" fill="#303030"/><rect x="8" y="12" width="2" height="2" fill="#502028"/><rect x="10" y="12" width="2" height="2" fill="#303030"/><rect x="12" y="12" width="2" height="2" fill="#b0b0b0"/><rect x="14" y="12" width="2" height="2" fill="#303030"/><rect x="16" y="12" width="2" height="2" fill="#502028"/><rect x="18" y="12" width="2" height="2" fill="#706060"/><rect x="20" y="12" width="2" height="2" fill="#402028"/><rect x="22" y="12" width="2" height="2" fill="#3020c0"/><rect x="24" y="12" width="2" height="2" fill="#a02030"/><rect x="26" y="12" width="2" height="2" fill="#3020c0"/><rect x="28" y="12" width="2" height="2" fill="#a02030"/><rect x="30" y="12" width="2" height="2" fill="#2010a0"/><rect x="32" y="12" width="2" height="2" fill="#3020c0"/><rect x="34" y="12" width="2" height="2" fill="#5040d0"/><rect x="36" y="12" width="2" height="2" fill="#5040d0"/><rect x="38" y="12" width="2" height="2" fill="#a02030"/><rect x="40" y="12" width="2" height="2" fill="#3020c0"/><rect x="42" y="12" width="2" height="2" fill="#a02030"/><rect x="44" y="12" width="2" height="2" fill="#2010a0"/><rect x="46" y="12" width="2" height="2" fill="#a02030"/><rect x="48" y="12" width="2" height="2" fill="#a02030"/><rect x="50" y="12" width="2" height="2" fill="#a02030"/><rect x="52" y="12" width="2" height="2" fill="#5040d0"/><rect x="54" y="12" width="2" height="2" fill="#3020c0"/><rect x="56" y="12" width="2" height="2" fill="#2a2030"/><rect x="58" y="12" width="2" height="2" fill="#a03040"/><rect x="60" y="12" width="2" height="2" fill="#687058"/><rect x="62" y="12" width="2" height="2" fill="#9a8a80"/><rect x="64" y="12" width="2" height="2" fill="#9a8a80"/><rect x="66" y="12" width="2" height="2" fill="#807868"/><rect x="68" y="12" width="2" height="2" fill="#484838"/><rect x="70" y="12" width="2" height="2" fill="#687058"/><rect x="72" y="12" width="2" height="2" fill="#b0a888"/><rect x="74" y="12" width="2" height="2" fill="#a09078"/><rect x="76" y="12" width="2" height="2" fill="#a09078"/><rect x="78" y="12" width="2" height="2" fill="#384030"/><rect x="80" y="12" width="2" height="2" fill="#a09078"/><rect x="82" y="12" width="2" height="2" fill="#a09078"/><rect x="84" y="12" width="2" height="2" fill="#b0a888"/><rect x="86" y="12" width="2" height="2" fill="#b0a888"/><rect x="88" y="12" width="2" height="2" fill="#807868"/><rect x="90" y="12" width="2" height="2" fill="#586048"/><rect x="92" y="12" width="2" height="2" fill="#b0a888"/><rect x="94" y="12" width="2" height="2" fill="#586048"/><rect x="96" y="12" width="2" height="2" fill="#484838"/><rect x="98" y="12" width="2" height="2" fill="#b0a888"/><rect x="100" y="12" width="2" height="2" fill="#484838"/><rect x="102" y="12" width="2" height="2" fill="#586048"/><rect x="104" y="12" width="2" height="2" fill="#9a8a80"/><rect x="106" y="12" width="2" height="2" fill="#687058"/><rect x="108" y="12" width="2" height="2" fill="#a09078"/><rect x="110" y="12" width="2" height="2" fill="#b0a888"/><rect x="112" y="12" width="2" height="2" fill="#807868"/><rect x="0" y="14" width="2" height="2" fill="#402028"/><rect x="2" y="14" width="2" height="2" fill="#d07088"/><rect x="4" y="14" width="2" height="2" fill="#c05060"/><rect x="6" y="14" width="2" height="2" fill="#b0b0b0"/><rect x="8" y="14" width="2" height="2" fill="#a03040"/><rect x="10" y="14" width="2" height="2" fill="#c05060"/><rect x="12" y="14" width="2" height="2" fill="#b0b0b0"/><rect x="14" y="14" width="2" height="2" fill="#c05060"/><rect x="16" y="14" width="2" height="2" fill="#502028"/><rect x="18" y="14" width="2" height="2" fill="#c05060"/><rect x="20" y="14" width="2" height="2" fill="#b0b0b0"/><rect x="22" y="14" width="2" height="2" fill="#a02030"/><rect x="24" y="14" width="2" height="2" fill="#5040d0"/><rect x="26" y="14" width="2" height="2" fill="#a02030"/><rect x="28" y="14" width="2" height="2" fill="#2010a0"/><rect x="30" y="14" width="2" height="2" fill="#2010a0"/><rect x="32" y="14" width="2" height="2" fill="#2010a0"/><rect x="34" y="14" width="2" height="2" fill="#3020c0"/><rect x="36" y="14" width="2" height="2" fill="#2010a0"/><rect x="38" y="14" width="2" height="2" fill="#5040d0"/><rect x="40" y="14" width="2" height="2" fill="#2010a0"/><rect x="42" y="14" width="2" height="2" fill="#a02030"/><rect x="44" y="14" width="2" height="2" fill="#2010a0"/><rect x="46" y="14" width="2" height="2" fill="#5040d0"/><rect x="48" y="14" width="2" height="2" fill="#5040d0"/><rect x="50" y="14" width="2" height="2" fill="#3020c0"/><rect x="52" y="14" width="2" height="2" fill="#2010a0"/><rect x="54" y="14" width="2" height="2" fill="#a02030"/><rect x="56" y="14" width="2" height="2" fill="#502028"/><rect x="58" y="14" width="2" height="2" fill="#706060"/><rect x="60" y="14" width="2" height="2" fill="#a09078"/><rect x="62" y="14" width="2" height="2" fill="#484838"/><rect x="64" y="14" width="2" height="2" fill="#9a8a80"/><rect x="66" y="14" width="2" height="2" fill="#484838"/><rect x="68" y="14" width="2" height="2" fill="#b0a888"/><rect x="70" y="14" width="2" height="2" fill="#384030"/><rect x="72" y="14" width="2" height="2" fill="#384030"/><rect x="74" y="14" width="2" height="2" fill="#687058"/><rect x="76" y="14" width="2" height="2" fill="#384030"/><rect x="78" y="14" width="2" height="2" fill="#586048"/><rect x="80" y="14" width="2" height="2" fill="#484838"/><rect x="82" y="14" width="2" height="2" fill="#687058"/><rect x="84" y="14" width="2" height="2" fill="#807868"/><rect x="86" y="14" width="2" height="2" fill="#586048"/><rect x="88" y="14" width="2" height="2" fill="#807868"/><rect x="90" y="14" width="2" height="2" fill="#a09078"/><rect x="92" y="14" width="2" height="2" fill="#b0a888"/><rect x="94" y="14" width="2" height="2" fill="#484838"/><rect x="96" y="14" width="2" height="2" fill="#586048"/><rect x="98" y="14" width="2" height="2" fill="#807868"/><rect x="100" y="14" width="2" height="2" fill="#a09078"/><rect x="102" y="14" width="2" height="2" fill="#484838"/><rect x="104" y="14" width="2" height="2" fill="#b0a888"/><rect x="106" y="14" width="2" height="2" fill="#384030"/><rect x="108" y="14" width="2" height="2" fill="#b0a888"/><rect x="110" y="14" width="2" height="2" fill="#807868"/><rect x="112" y="14" width="2" height="2" fill="#9a8a80"/><rect x="0" y="16" width="2" height="2" fill="#c05060"/><rect x="2" y="16" width="2" height="2" fill="#c05060"/><rect x="4" y="16" width="2" height="2" fill="#402028"/><rect x="6" y="16" width="2" height="2" fill="#502028"/><rect x="8" y="16" width="2" height="2" fill="#a03040"/><rect x="10" y="16" width="2" height="2" fill="#402028"/><rect x="12" y="16" width="2" height="2" fill="#402028"/><rect x="14" y="16" width="2" height="2" fill="#402028"/><rect x="16" y="16" width="2" height="2" fill="#9a9a90"/><rect x="18" y="16" width="2" height="2" fill="#402028"/><rect x="20" y="16" width="2" height="2" fill="#c05060"/><rect x="22" y="16" width="2" height="2" fill="#a03040"/><rect x="24" y="16" width="2" height="2" fill="#402028"/><rect x="26" y="16" width="2" height="2" fill="#c05060"/><rect x="28" y="16" width="2" height="2" fill="#402028"/><rect x="30" y="16" width="2" height="2" fill="#c05060"/><rect x="32" y="16" width="2" height="2" fill="#a03040"/><rect x="34" y="16" width="2" height="2" fill="#402028"/><rect x="36" y="16" width="2" height="2" fill="#502028"/><rect x="38" y="16" width="2" height="2" fill="#a03040"/><rect x="40" y="16" width="2" height="2" fill="#502028"/><rect x="42" y="16" width="2" height="2" fill="#402028"/><rect x="44" y="16" width="2" height="2" fill="#9a9a90"/><rect x="46" y="16" width="2" height="2" fill="#c05060"/><rect x="48" y="16" width="2" height="2" fill="#c05060"/><rect x="50" y="16" width="2" height="2" fill="#9a9a90"/><rect x="52" y="16" width="2" height="2" fill="#a03040"/><rect x="54" y="16" width="2" height="2" fill="#a03040"/><rect x="56" y="16" width="2" height="2" fill="#402028"/><rect x="58" y="16" width="2" height="2" fill="#a03040"/><rect x="60" y="16" width="2" height="2" fill="#586048"/><rect x="62" y="16" width="2" height="2" fill="#484838"/><rect x="64" y="16" width="2" height="2" fill="#807868"/><rect x="66" y="16" width="2" height="2" fill="#484838"/><rect x="68" y="16" width="2" height="2" fill="#807868"/><rect x="70" y="16" width="2" height="2" fill="#b0a888"/><rect x="72" y="16" width="2" height="2" fill="#b0a888"/><rect x="74" y="16" width="2" height="2" fill="#384030"/><rect x="76" y="16" width="2" height="2" fill="#a09078"/><rect x="78" y="16" width="2" height="2" fill="#586048"/><rect x="80" y="16" width="2" height="2" fill="#484838"/><rect x="82" y="16" width="2" height="2" fill="#687058"/><rect x="84" y="16" width="2" height="2" fill="#9a8a80"/><rect x="86" y="16" width="2" height="2" fill="#586048"/><rect x="88" y="16" width="2" height="2" fill="#b0a888"/><rect x="90" y="16" width="2" height="2" fill="#586048"/><rect x="92" y="16" width="2" height="2" fill="#807868"/><rect x="94" y="16" width="2" height="2" fill="#484838"/><rect x="96" y="16" width="2" height="2" fill="#586048"/><rect x="98" y="16" width="2" height="2" fill="#807868"/><rect x="100" y="16" width="2" height="2" fill="#384030"/><rect x="102" y="16" width="2" height="2" fill="#a09078"/><rect x="104" y="16" width="2" height="2" fill="#807868"/><rect x="106" y="16" width="2" height="2" fill="#807868"/><rect x="108" y="16" width="2" height="2" fill="#586048"/><rect x="110" y="16" width="2" height="2" fill="#687058"/><rect x="112" y="16" width="2" height="2" fill="#a09078"/><rect x="0" y="18" width="2" height="2" fill="#4a80ff"/><rect x="2" y="18" width="2" height="2" fill="#3a70f0"/><rect x="4" y="18" width="2" height="2" fill="#3a70f0"/><rect x="6" y="18" width="2" height="2" fill="#4a80ff"/><rect x="8" y="18" width="2" height="2" fill="#4a80ff"/><rect x="10" y="18" width="2" height="2" fill="#3a70f0"/><rect x="12" y="18" width="2" height="2" fill="#3a70f0"/><rect x="14" y="18" width="2" height="2" fill="#4a80ff"/><rect x="16" y="18" width="2" height="2" fill="#4a80ff"/><rect x="18" y="18" width="2" height="2" fill="#3a70f0"/><rect x="20" y="18" width="2" height="2" fill="#4a80ff"/><rect x="22" y="18" width="2" height="2" fill="#4a80ff"/><rect x="24" y="18" width="2" height="2" fill="#4a80ff"/><rect x="26" y="18" width="2" height="2" fill="#402028"/><rect x="28" y="18" width="2" height="2" fill="#a03040"/><rect x="30" y="18" width="2" height="2" fill="#9a9a90"/><rect x="32" y="18" width="2" height="2" fill="#c05060"/><rect x="34" y="18" width="2" height="2" fill="#a03040"/><rect x="36" y="18" width="2" height="2" fill="#9a9a90"/><rect x="38" y="18" width="2" height="2" fill="#c05060"/><rect x="40" y="18" width="2" height="2" fill="#402028"/><rect x="42" y="18" width="2" height="2" fill="#402028"/><rect x="44" y="18" width="2" height="2" fill="#402028"/><rect x="46" y="18" width="2" height="2" fill="#9a9a90"/><rect x="48" y="18" width="2" height="2" fill="#9a9a90"/><rect x="50" y="18" width="2" height="2" fill="#c05060"/><rect x="52" y="18" width="2" height="2" fill="#a03040"/><rect x="54" y="18" width="2" height="2" fill="#502028"/><rect x="56" y="18" width="2" height="2" fill="#a03040"/><rect x="58" y="18" width="2" height="2" fill="#502028"/><rect x="60" y="18" width="2" height="2" fill="#b0a888"/><rect x="62" y="18" width="2" height="2" fill="#a09078"/><rect x="64" y="18" width="2" height="2" fill="#384030"/><rect x="66" y="18" width="2" height="2" fill="#9a8a80"/><rect x="68" y="18" width="2" height="2" fill="#b0a888"/><rect x="70" y="18" width="2" height="2" fill="#b0a888"/><rect x="72" y="18" width="2" height="2" fill="#9a8a80"/><rect x="74" y="18" width="2" height="2" fill="#9a8a80"/><rect x="76" y="18" width="2" height="2" fill="#9a8a80"/><rect x="78" y="18" width="2" height="2" fill="#a09078"/><rect x="80" y="18" width="2" height="2" fill="#384030"/><rect x="82" y="18" width="2" height="2" fill="#b0a888"/><rect x="84" y="18" width="2" height="2" fill="#a09078"/><rect x="86" y="18" width="2" height="2" fill="#9a8a80"/><rect x="88" y="18" width="2" height="2" fill="#807868"/><rect x="90" y="18" width="2" height="2" fill="#b0a888"/><rect x="92" y="18" width="2" height="2" fill="#9a8a80"/><rect x="94" y="18" width="2" height="2" fill="#a09078"/><rect x="96" y="18" width="2" height="2" fill="#9a8a80"/><rect x="98" y="18" width="2" height="2" fill="#b0a888"/><rect x="100" y="18" width="2" height="2" fill="#484838"/><rect x="102" y="18" width="2" height="2" fill="#384030"/><rect x="104" y="18" width="2" height="2" fill="#384030"/><rect x="106" y="18" width="2" height="2" fill="#a09078"/><rect x="108" y="18" width="2" height="2" fill="#a09078"/><rect x="110" y="18" width="2" height="2" fill="#586048"/><rect x="112" y="18" width="2" height="2" fill="#b0a888"/><rect x="0" y="20" width="2" height="2" fill="#3a70f0"/><rect x="2" y="20" width="2" height="2" fill="#4a80ff"/><rect x="4" y="20" width="2" height="2" fill="#4a80ff"/><rect x="6" y="20" width="2" height="2" fill="#4a80ff"/><rect x="8" y="20" width="2" height="2" fill="#4a80ff"/><rect x="10" y="20" width="2" height="2" fill="#3a70f0"/><rect x="12" y="20" width="2" height="2" fill="#4a80ff"/><rect x="14" y="20" width="2" height="2" fill="#4a80ff"/><rect x="16" y="20" width="2" height="2" fill="#3a70f0"/><rect x="18" y="20" width="2" height="2" fill="#4a80ff"/><rect x="20" y="20" width="2" height="2" fill="#4a80ff"/><rect x="22" y="20" width="2" height="2" fill="#4a80ff"/><rect x="24" y="20" width="2" height="2" fill="#4a80ff"/><rect x="26" y="20" width="2" height="2" fill="#402028"/><rect x="28" y="20" width="2" height="2" fill="#502028"/><rect x="30" y="20" width="2" height="2" fill="#a03040"/><rect x="32" y="20" width="2" height="2" fill="#c05060"/><rect x="34" y="20" width="2" height="2" fill="#a03040"/><rect x="36" y="20" width="2" height="2" fill="#402028"/><rect x="38" y="20" width="2" height="2" fill="#402028"/><rect x="40" y="20" width="2" height="2" fill="#402028"/><rect x="42" y="20" width="2" height="2" fill="#a03040"/><rect x="44" y="20" width="2" height="2" fill="#502028"/><rect x="46" y="20" width="2" height="2" fill="#502028"/><rect x="48" y="20" width="2" height="2" fill="#9a9a90"/><rect x="50" y="20" width="2" height="2" fill="#a03040"/><rect x="52" y="20" width="2" height="2" fill="#402028"/><rect x="54" y="20" width="2" height="2" fill="#502028"/><rect x="56" y="20" width="2" height="2" fill="#402028"/><rect x="58" y="20" width="2" height="2" fill="#a03040"/><rect x="60" y="20" width="2" height="2" fill="#b0a888"/><rect x="62" y="20" width="2" height="2" fill="#a09078"/><rect x="64" y="20" width="2" height="2" fill="#807868"/><rect x="66" y="20" width="2" height="2" fill="#b0a888"/><rect x="68" y="20" width="2" height="2" fill="#586048"/><rect x="70" y="20" width="2" height="2" fill="#384030"/><rect x="72" y="20" width="2" height="2" fill="#b0a888"/><rect x="74" y="20" width="2" height="2" fill="#484838"/><rect x="76" y="20" width="2" height="2" fill="#687058"/><rect x="78" y="20" width="2" height="2" fill="#384030"/><rect x="80" y="20" width="2" height="2" fill="#687058"/><rect x="82" y="20" width="2" height="2" fill="#484838"/><rect x="84" y="20" width="2" height="2" fill="#807868"/><rect x="86" y="20" width="2" height="2" fill="#484838"/><rect x="88" y="20" width="2" height="2" fill="#384030"/><rect x="90" y="20" width="2" height="2" fill="#a09078"/><rect x="92" y="20" width="2" height="2" fill="#807868"/><rect x="94" y="20" width="2" height="2" fill="#484838"/><rect x="96" y="20" width="2" height="2" fill="#9a8a80"/><rect x="98" y="20" width="2" height="2" fill="#586048"/><rect x="100" y="20" width="2" height="2" fill="#b0a888"/><rect x="102" y="20" width="2" height="2" fill="#9a8a80"/><rect x="104" y="20" width="2" height="2" fill="#807868"/><rect x="106" y="20" width="2" height="2" fill="#586048"/><rect x="108" y="20" width="2" height="2" fill="#586048"/><rect x="110" y="20" width="2" height="2" fill="#9a8a80"/><rect x="112" y="20" width="2" height="2" fill="#484838"/></svg>
<div class="t" style="left:236.5px;top:142.42px;font-size:10.9px;line-height:12px;color:#111;width:250.5px;text-align:justify;text-align-last:justify;--k:'236.5|151.2';">para las tutorías sincrónicas y asincrónicas y los</div>
<div class="t" style="left:236.5px;top:154.62px;font-size:10.9px;line-height:12px;color:#111;width:250.5px;text-align:justify;text-align-last:justify;--k:'236.5|163.4';">medios por los cuales es posible comunicarse con</div>
<div class="t" style="left:236.5px;top:166.82px;font-size:10.9px;line-height:12px;color:#111;">docentes y directivas de la institución.</div>
<div class="t" style="left:236.5px;top:190.62px;font-size:10.9px;line-height:12px;color:#111;width:250.5px;text-align:justify;text-align-last:justify;--k:'236.5|199.4';">Nuestro Weebly se encuentra disponible en el</div>
<div class="t" style="left:236.5px;top:202.92px;font-size:10.9px;line-height:12px;color:#111;width:250.5px;text-align:justify;text-align-last:justify;--k:'236.5|211.7';">siguiente enlace:</div>
<div class="t" style="left:236.5px;top:215.22px;font-size:10.9px;line-height:12px;color:#1a1aff;text-decoration:underline;letter-spacing:0.15px;">https://colegiobicentenariofeyalegria.weebly.com/</div>
<div class="t" style="left:497.2px;top:142.42px;font-size:10.9px;line-height:12px;color:#111;">Media</div>
<div class="t" style="left:110.0px;top:240.12px;font-size:10.9px;line-height:12px;color:#111;width:115.0px;text-align:justify;text-align-last:justify;--k:'110.0|248.9';">Caja de herramientas</div>
<div class="t" style="left:110.0px;top:251.92px;font-size:10.9px;line-height:12px;color:#111;">Fe y Alegría</div>
<svg class="a" style="left:110px;top:263.5px" width="82" height="57" viewBox="0 0 82 57">
<rect x="0" y="0" width="82" height="57" fill="#26362c"/>
<rect x="0" y="0" width="82" height="5" fill="#f6f2dc"/>
<rect x="12" y="1.5" width="45" height="1.5" fill="#8a8470"/>
<rect x="0" y="5" width="82" height="7" fill="#d4ceb0"/>
<rect x="0" y="12" width="82" height="45" fill="#283a30"/>
<rect x="0" y="34" width="40" height="23" fill="#1c3a24"/>
<path d="M10 31 Q20 27 24 37 L18 42 Z" fill="#e8e0e0"/>
<path d="M10 33 Q16 32 22 39 L14 40 Z" fill="#e03c90"/>
<path d="M12 36 Q18 36 24 41 L16 44 Z" fill="#3a7ad0"/>
<path d="M22 38 Q30 30 34 36 Q30 44 26 48 Z" fill="#40c060"/>
<path d="M24 44 Q28 52 26 56 L22 50 Z" fill="#3aa0c8"/>
<path d="M36 38 Q46 34 52 40 Q60 32 66 36 Q60 42 54 46 Q46 44 38 42 Z" fill="#2a8a90" opacity=".85"/>
<rect x="31" y="41" width="10" height="2" fill="#c0c8c0"/>
<rect x="30" y="44" width="38" height="5" fill="#d42828"/>
<rect x="34" y="50" width="30" height="1.5" fill="#7a9a8a"/>
</svg>
<div class="t" style="left:236.5px;top:240.52px;font-size:10.9px;line-height:12px;color:#111;width:250.5px;text-align:justify;text-align-last:justify;--k:'236.5|249.3';">Para el desarrollo de las capacidades y</div>
<div class="t" style="left:236.5px;top:252.62px;font-size:10.9px;line-height:12px;color:#111;width:250.5px;text-align:justify;text-align-last:justify;--k:'236.5|261.4';">competencias socioemocionales, se cuenta con</div>
<div class="t" style="left:236.5px;top:264.72px;font-size:10.9px;line-height:12px;color:#111;width:250.5px;text-align:justify;text-align-last:justify;--k:'236.5|273.5';">una caja de herramientas con materiales</div>
<div class="t" style="left:236.5px;top:276.82px;font-size:10.9px;line-height:12px;color:#111;">descargables.</div>
<div class="t" style="left:236.5px;top:301.02px;font-size:10.9px;line-height:12px;color:#111;width:250.5px;text-align:justify;text-align-last:justify;--k:'236.5|309.8';">Los materiales permiten el trabajo de capacidades</div>
<div class="t" style="left:236.5px;top:313.12px;font-size:10.9px;line-height:12px;color:#111;width:250.5px;text-align:justify;text-align-last:justify;--k:'236.5|321.9';">para el cuidado del cuerpo, psicosociales,</div>
<div class="t" style="left:497.2px;top:240.52px;font-size:10.9px;line-height:12px;color:#111;">Transición</div>
<div class="t" style="left:497.2px;top:252.62px;font-size:10.9px;line-height:12px;color:#111;">Básica Primaria</div>
<div class="t" style="left:497.2px;top:264.72px;font-size:10.9px;line-height:12px;color:#111;">Básica</div>
<div class="t" style="left:497.2px;top:276.82px;font-size:10.9px;line-height:12px;color:#111;">Secundaria</div>
<div class="t" style="left:497.2px;top:288.92px;font-size:10.9px;line-height:12px;color:#111;">Educación</div>
<div class="t" style="left:497.2px;top:301.02px;font-size:10.9px;line-height:12px;color:#111;">Media</div>
<div class="t" style="left:42.5px;top:373.65px;font-size:16.3px;line-height:21.4px;color:#111;font-weight:bold;">1.6.3 Nación – Ministerio de Defensa Nacional – Policía Nacional</div>
<div class="t" style="left:42.5px;top:415.87px;font-size:16.25px;line-height:21.4px;color:#1a1a1a;width:568.7px;text-align:justify;text-align-last:justify;--k:'42.5|431.2';">22. Con escrito del 21 de febrero del presente año, el Secretario General de</div>
<div class="t" style="left:42.5px;top:437.47px;font-size:16.25px;line-height:21.4px;color:#1a1a1a;width:568.7px;text-align:justify;text-align-last:justify;--k:'42.5|452.8';">dicha entidad, afirmó que no se configuran en el presente proceso los</div>
<div class="t" style="left:42.5px;top:459.07px;font-size:16.25px;line-height:21.4px;color:#1a1a1a;width:568.7px;text-align:justify;text-align-last:justify;--k:'42.5|474.4';">defectos fáctico o material, alegados por la parte accionante. Así, luego de</div>
<div class="t" style="left:42.5px;top:480.47px;font-size:16.25px;line-height:21.4px;color:#1a1a1a;width:568.7px;text-align:justify;text-align-last:justify;--k:'42.5|495.8';">transcribir algunos apartes de la sentencia objeto de tutela advirtió que el <i>ad</i></div>
<div class="t" style="left:42.5px;top:502.07px;font-size:16.25px;line-height:21.4px;color:#1a1a1a;width:568.7px;text-align:justify;text-align-last:justify;--k:'42.5|517.4';"><i style="text-decoration:underline wavy #e03030;text-decoration-thickness:1px;text-underline-offset:2px">quem</i> valoró cada una de las pruebas, testimoniales y documentales,</div>
<div class="t" style="left:42.5px;top:523.17px;font-size:16.25px;line-height:21.4px;color:#1a1a1a;">aportadas al expediente judicial de acuerdo con las reglas de la sana crítica.</div>
<div class="t" style="left:42.5px;top:567.27px;font-size:16.25px;line-height:21.4px;color:#1a1a1a;width:568.7px;text-align:justify;text-align-last:justify;--k:'42.5|582.6';">23. Así mismo, a juicio de la entidad, se expuso el valor que se le asignó a</div>
<div class="t" style="left:42.5px;top:588.67px;font-size:16.25px;line-height:21.4px;color:#1a1a1a;width:568.7px;text-align:justify;text-align-last:justify;--k:'42.5|604.0';">cada una de las pruebas lo que le permitió concluir al Consejo de Estado,</div>
<div class="t" style="left:42.5px;top:610.07px;font-size:16.25px;line-height:21.4px;color:#1a1a1a;width:568.7px;text-align:justify;text-align-last:justify;--k:'42.5|625.4';">Sección Tercera, Subsección “A”, que si bien, dentro de las funciones</div>
<div class="t" style="left:42.5px;top:631.37px;font-size:16.25px;line-height:21.4px;color:#1a1a1a;width:568.7px;text-align:justify;text-align-last:justify;--k:'42.5|646.7';">misionales de la institución está la de velar por el <i>"mantenimiento de las</i></div>
<div class="t" style="left:42.5px;top:652.27px;font-size:16.25px;line-height:21.4px;color:#1a1a1a;width:612.4px;transform-origin:0 0;transform:scaleX(0.9286);text-align:justify;text-align-last:justify;--k:'42.5|667.6';"><i>condiciones necesarias para el ejercicio de los derechos y libertades públicas, y para</i></div>
<div class="t" style="left:42.5px;top:673.17px;font-size:16.25px;line-height:21.4px;color:#1a1a1a;width:601.1px;transform-origin:0 0;transform:scaleX(0.9461);text-align:justify;text-align-last:justify;--k:'42.5|688.5';"><i>asegurar que los habitantes de Colombia convivan en paz</i>", lo cierto es que, ante la</div>
</div></div>
  </div>
<div class="a" style="left:5px;top:148px;width:12px;height:544px;background:#fdfdfd"></div>
<div class="t" style="left:5px;top:143.2px;width:12px;height:10px;text-align:center;font-size:8px;line-height:10px;color:#333;transform:rotate(-90deg)">5</div>
<div class="t" style="left:5px;top:181.9px;width:12px;height:10px;text-align:center;font-size:8px;line-height:10px;color:#333;transform:rotate(-90deg)">6</div>
<div class="t" style="left:5px;top:220.6px;width:12px;height:10px;text-align:center;font-size:8px;line-height:10px;color:#333;transform:rotate(-90deg)">7</div>
<div class="t" style="left:5px;top:259.3px;width:12px;height:10px;text-align:center;font-size:8px;line-height:10px;color:#333;transform:rotate(-90deg)">8</div>
<div class="t" style="left:5px;top:298.0px;width:12px;height:10px;text-align:center;font-size:8px;line-height:10px;color:#333;transform:rotate(-90deg)">9</div>
<div class="t" style="left:5px;top:336.7px;width:12px;height:10px;text-align:center;font-size:8px;line-height:10px;color:#333;transform:rotate(-90deg)">10</div>
<div class="t" style="left:5px;top:375.4px;width:12px;height:10px;text-align:center;font-size:8px;line-height:10px;color:#333;transform:rotate(-90deg)">11</div>
<div class="t" style="left:5px;top:414.1px;width:12px;height:10px;text-align:center;font-size:8px;line-height:10px;color:#333;transform:rotate(-90deg)">12</div>
<div class="t" style="left:5px;top:452.8px;width:12px;height:10px;text-align:center;font-size:8px;line-height:10px;color:#333;transform:rotate(-90deg)">13</div>
<div class="t" style="left:5px;top:491.5px;width:12px;height:10px;text-align:center;font-size:8px;line-height:10px;color:#333;transform:rotate(-90deg)">14</div>
<div class="t" style="left:5px;top:530.2px;width:12px;height:10px;text-align:center;font-size:8px;line-height:10px;color:#333;transform:rotate(-90deg)">15</div>
<div class="t" style="left:5px;top:568.9px;width:12px;height:10px;text-align:center;font-size:8px;line-height:10px;color:#333;transform:rotate(-90deg)">16</div>
<div class="t" style="left:5px;top:607.6px;width:12px;height:10px;text-align:center;font-size:8px;line-height:10px;color:#333;transform:rotate(-90deg)">17</div>
<div class="t" style="left:5px;top:646.3px;width:12px;height:10px;text-align:center;font-size:8px;line-height:10px;color:#333;transform:rotate(-90deg)">18</div>
<div class="t" style="left:5px;top:685.0px;width:12px;height:10px;text-align:center;font-size:8px;line-height:10px;color:#333;transform:rotate(-90deg)">19</div>
<div class="a" style="left:11px;top:157.9px;width:1px;height:1px;background:#555"></div>
<div class="a" style="left:9px;top:167.6px;width:4px;height:1px;background:#555"></div>
<div class="a" style="left:11px;top:177.3px;width:1px;height:1px;background:#555"></div>
<div class="a" style="left:11px;top:196.6px;width:1px;height:1px;background:#555"></div>
<div class="a" style="left:9px;top:206.3px;width:4px;height:1px;background:#555"></div>
<div class="a" style="left:11px;top:216.0px;width:1px;height:1px;background:#555"></div>
<div class="a" style="left:11px;top:235.3px;width:1px;height:1px;background:#555"></div>
<div class="a" style="left:9px;top:245.0px;width:4px;height:1px;background:#555"></div>
<div class="a" style="left:11px;top:254.7px;width:1px;height:1px;background:#555"></div>
<div class="a" style="left:11px;top:274.0px;width:1px;height:1px;background:#555"></div>
<div class="a" style="left:9px;top:283.7px;width:4px;height:1px;background:#555"></div>
<div class="a" style="left:11px;top:293.4px;width:1px;height:1px;background:#555"></div>
<div class="a" style="left:11px;top:312.7px;width:1px;height:1px;background:#555"></div>
<div class="a" style="left:9px;top:322.4px;width:4px;height:1px;background:#555"></div>
<div class="a" style="left:11px;top:332.1px;width:1px;height:1px;background:#555"></div>
<div class="a" style="left:11px;top:351.4px;width:1px;height:1px;background:#555"></div>
<div class="a" style="left:9px;top:361.1px;width:4px;height:1px;background:#555"></div>
<div class="a" style="left:11px;top:370.8px;width:1px;height:1px;background:#555"></div>
<div class="a" style="left:11px;top:390.1px;width:1px;height:1px;background:#555"></div>
<div class="a" style="left:9px;top:399.8px;width:4px;height:1px;background:#555"></div>
<div class="a" style="left:11px;top:409.5px;width:1px;height:1px;background:#555"></div>
<div class="a" style="left:11px;top:428.8px;width:1px;height:1px;background:#555"></div>
<div class="a" style="left:9px;top:438.5px;width:4px;height:1px;background:#555"></div>
<div class="a" style="left:11px;top:448.2px;width:1px;height:1px;background:#555"></div>
<div class="a" style="left:11px;top:467.5px;width:1px;height:1px;background:#555"></div>
<div class="a" style="left:9px;top:477.2px;width:4px;height:1px;background:#555"></div>
<div class="a" style="left:11px;top:486.9px;width:1px;height:1px;background:#555"></div>
<div class="a" style="left:11px;top:506.2px;width:1px;height:1px;background:#555"></div>
<div class="a" style="left:9px;top:515.9px;width:4px;height:1px;background:#555"></div>
<div class="a" style="left:11px;top:525.6px;width:1px;height:1px;background:#555"></div>
<div class="a" style="left:11px;top:544.9px;width:1px;height:1px;background:#555"></div>
<div class="a" style="left:9px;top:554.6px;width:4px;height:1px;background:#555"></div>
<div class="a" style="left:11px;top:564.3px;width:1px;height:1px;background:#555"></div>
<div class="a" style="left:11px;top:583.6px;width:1px;height:1px;background:#555"></div>
<div class="a" style="left:9px;top:593.3px;width:4px;height:1px;background:#555"></div>
<div class="a" style="left:11px;top:603.0px;width:1px;height:1px;background:#555"></div>
<div class="a" style="left:11px;top:622.3px;width:1px;height:1px;background:#555"></div>
<div class="a" style="left:9px;top:632.0px;width:4px;height:1px;background:#555"></div>
<div class="a" style="left:11px;top:641.7px;width:1px;height:1px;background:#555"></div>
<div class="a" style="left:11px;top:661.0px;width:1px;height:1px;background:#555"></div>
<div class="a" style="left:9px;top:670.7px;width:4px;height:1px;background:#555"></div>
<div class="a" style="left:11px;top:680.4px;width:1px;height:1px;background:#555"></div>
  <div id="status" class="a"><div style="position:absolute;left:-1px;top:-707px">
<div class="a" style="left:1px;top:706px;width:678px;height:1px;background:#dcdcdc"></div>
<div class="t" style="left:7.0px;top:709.31px;font-size:9.5px;line-height:14px;color:#444;">Página 9 de 21</div>
<div class="t" style="left:87.0px;top:709.31px;font-size:9.5px;line-height:14px;color:#444;">7990 palabras</div>
<svg class="a" style="left:191px;top:711px" width="13" height="11" viewBox="0 0 13 11"><path d="M0.5 0.5h4l2 1v9l-2-1h-4z M6.5 1.5l2-1h1 M6.5 10.5l2-1h1" fill="none" stroke="#666"/><path d="M9 3l3.5 4M12.5 3L9 7" stroke="#666"/></svg>
<div class="t" style="left:217.5px;top:709.31px;font-size:9.5px;line-height:14px;color:#444;">Español (Colombia)</div>
<svg class="a" style="left:430px;top:710px" width="12" height="11" viewBox="0 0 12 11"><path d="M0.5 1h4.5l1 1 1-1h4.5v9h-4.5l-1 1-1-1H0.5z M6 2v9" fill="none" stroke="#666"/><path d="M2 4h2.5M2 6h2.5M7.5 4h2.5M7.5 6h2.5" stroke="#999"/></svg>
<div class="a" style="left:453px;top:706px;width:31px;height:18px;background:#c8c8c8"></div>
<svg class="a" style="left:462px;top:710px" width="13" height="11" viewBox="0 0 13 11"><rect x="0.5" y="0.5" width="12" height="10" fill="none" stroke="#666"/><path d="M2.5 3h8M2.5 5.5h8M2.5 8h8" stroke="#666"/></svg>
<svg class="a" style="left:496px;top:710px" width="13" height="12" viewBox="0 0 13 12"><rect x="0.5" y="0.5" width="10" height="9" fill="none" stroke="#666"/><path d="M0.5 3h10M2.5 5h4M2.5 7h3" stroke="#666"/><circle cx="9.5" cy="8.5" r="2.8" fill="#f0f0f0" stroke="#666"/></svg>
<div class="a" style="left:522px;top:714.5px;width:6px;height:1.2px;background:#555"></div>
<div class="a" style="left:531px;top:715px;width:86px;height:1px;background:#999"></div>
<div class="a" style="left:573px;top:710px;width:4px;height:10px;background:#555"></div>
<div class="a" style="left:619px;top:714.5px;width:8px;height:1.3px;background:#555"></div>
<div class="a" style="left:622.4px;top:711px;width:1.3px;height:8px;background:#555"></div>
<div class="t" style="left:639.5px;top:709.31px;font-size:9.5px;line-height:14px;color:#444;">120%</div>
</div></div>
</div>

<!-- ================= ACROBAT ================= -->
<div id="acro" class="a" style="left:0;top:0;width:1364px;height:732px;background:transparent">
<div class="a" style="left:680px;top:49px;width:1px;height:677px;background:#a0a0a0"></div>
<div class="a" style="left:681px;top:0;width:2px;height:732px;background:#8e8e8e"></div>
<div class="a" style="left:1358px;top:0;width:1px;height:732px;background:#8e8e8e"></div>
<div class="a" style="left:1359px;top:0;width:5px;height:732px;background:#e6e6e6"></div>
<div class="a" style="left:683px;top:0;width:675px;height:732px;background:#fafafa"></div>
<div class="a" style="left:681px;top:0;width:678px;height:1px;background:#9a9a9a"></div>
<svg class="a" style="left:690px;top:6px" width="12" height="13" viewBox="0 0 12 13"><path d="M0.7 0.7h7.5l3 3v8.6H0.7z" fill="#fff" stroke="#d9262b" stroke-width="1.3"/><path d="M3 9.5c1-2 2-4.5 2.2-6.5 0.3 2 1.5 4 4 5-2 0-4 0.3-6.2 1.5z" fill="none" stroke="#d9262b" stroke-width="0.9"/></svg>
<div class="t" style="left:707.4px;top:7.54px;font-size:10px;line-height:14px;color:#9d9d9d;letter-spacing:-0.05px;">2020-00120-01_(4)[1].pdf - Adobe Acrobat Reader DC</div>
<div class="a" style="left:1257px;top:13px;width:9px;height:1px;background:#777"></div>
<div class="a" style="left:1295px;top:8.5px;width:9px;height:9px;border:1px solid #777"></div>
<svg class="a" style="left:1334px;top:8px" width="10" height="10" viewBox="0 0 10 10"><path d="M0.5 0.5l9 9M9.5 0.5l-9 9" stroke="#777" stroke-width="1"/></svg>
<div class="t" style="left:688.5px;top:28.40px;font-size:12.4px;line-height:15px;color:#333;text-decoration-thickness:1px;"><u>A</u>rchivo</div>
<div class="t" style="left:743.5px;top:28.40px;font-size:12.4px;line-height:15px;color:#333;text-decoration-thickness:1px;"><u>E</u>dición</div>
<div class="t" style="left:797.0px;top:28.40px;font-size:12.4px;line-height:15px;color:#333;text-decoration-thickness:1px;"><u>V</u>er</div>
<div class="t" style="left:827.0px;top:28.40px;font-size:12.4px;line-height:15px;color:#333;text-decoration-thickness:1px;">Ve<u>n</u>tana</div>
<div class="t" style="left:884.0px;top:28.40px;font-size:12.4px;line-height:15px;color:#333;text-decoration-thickness:1px;">A<u>y</u>uda</div>
<div class="a" style="left:683px;top:43px;width:675px;height:32px;background:#f0f0f0"></div>
<div class="a" style="left:683px;top:43px;width:675px;height:1px;background:#d6d6d6"></div>
<div class="a" style="left:683px;top:74px;width:675px;height:1px;background:#d6d6d6"></div>
<div class="a" style="left:866px;top:44px;width:153px;height:31px;background:#fafafa"></div>
<div class="a" style="left:865px;top:44px;width:1px;height:31px;background:#d6d6d6"></div>
<div class="a" style="left:1018px;top:44px;width:1px;height:31px;background:#d6d6d6"></div>
<div class="t" style="left:697.2px;top:52.10px;font-size:13px;line-height:16px;color:#444;">Inicio</div>
<div class="t" style="left:758.4px;top:52.10px;font-size:13px;line-height:16px;color:#444;">Herramientas</div>
<div class="t" style="left:888.5px;top:52.68px;font-size:11.9px;line-height:16px;color:#333;">2020-00120-01_(4...</div>
<svg class="a" style="left:1005px;top:56px" width="7" height="7" viewBox="0 0 7 7"><path d="M0.5 0.5l6 6M6.5 0.5l-6 6" stroke="#444" stroke-width="1.4"/></svg>
<svg class="a" style="left:1203px;top:50px" width="19" height="19" viewBox="0 0 19 19"><circle cx="9.5" cy="9.5" r="8.5" fill="none" stroke="#555" stroke-width="1.4"/><path d="M7 7.3a2.5 2.5 0 1 1 3.3 2.3c-0.6 0.3-0.8 0.7-0.8 1.4v0.5" fill="none" stroke="#555" stroke-width="1.4"/><circle cx="9.5" cy="13.8" r="0.9" fill="#555"/></svg>
<div class="t" style="left:1247.7px;top:52.66px;font-size:13.4px;line-height:16px;color:#444;font-weight:bold;">Iniciar sesión</div>
<div class="a" style="left:683px;top:114px;width:675px;height:1px;background:repeating-linear-gradient(90deg,#c8c8c8 0 2px,transparent 2px 3px)"></div>
<svg class="a" style="left:695px;top:85px" width="18" height="18" viewBox="0 0 18 18"><path d="M1 1h13l3 3v13H1z" fill="none" stroke="#bbb" stroke-width="1.3"/><path d="M4.5 1v5h8V1M4 17v-6h10v6" fill="none" stroke="#bbb" stroke-width="1.2"/></svg>
<svg class="a" style="left:731px;top:84px" width="21" height="20" viewBox="0 0 21 20"><path d="M10.5 1l2.6 6.3 6.8 0.5-5.2 4.4 1.7 6.6-5.9-3.6-5.9 3.6 1.7-6.6L1.1 7.8l6.8-0.5z" fill="none" stroke="#555" stroke-width="1.4" stroke-linejoin="round"/></svg>
<svg class="a" style="left:769px;top:85px" width="20" height="20" viewBox="0 0 20 20"><path d="M6 14H4.5a3.8 3.8 0 0 1-0.3-7.6A5.5 5.5 0 0 1 14.8 5a4.5 4.5 0 0 1 0.7 9H14" fill="none" stroke="#555" stroke-width="1.4"/><path d="M10 19V9M6.8 12l3.2-3.2 3.2 3.2" fill="none" stroke="#555" stroke-width="1.5"/></svg>
<svg class="a" style="left:806px;top:85px" width="19" height="18" viewBox="0 0 19 18"><path d="M4.5 5V1h10v4" fill="none" stroke="#555" stroke-width="1.4"/><rect x="1" y="5" width="17" height="8" rx="1.5" fill="#555"/><rect x="4.5" y="10" width="10" height="7" fill="#fafafa" stroke="#555" stroke-width="1.4"/><path d="M6.5 12.5h6M6.5 14.8h6" stroke="#555"/></svg>
<svg class="a" style="left:845px;top:87px" width="19" height="14" viewBox="0 0 19 14"><rect x="0.7" y="0.7" width="17.6" height="12.6" fill="none" stroke="#555" stroke-width="1.3"/><path d="M0.7 0.7l8.8 7 8.8-7M0.7 13.3l6.3-6M18.3 13.3l-6.3-6" fill="none" stroke="#555" stroke-width="1.1"/></svg>
<svg class="a" style="left:882px;top:85px" width="20" height="20" viewBox="0 0 20 20"><circle cx="8" cy="8" r="7" fill="none" stroke="#555" stroke-width="1.5"/><path d="M13 13l6 6" stroke="#555" stroke-width="1.8"/><circle cx="5.2" cy="8" r="0.9" fill="#555"/><circle cx="8" cy="8" r="0.9" fill="#555"/><circle cx="10.8" cy="8" r="0.9" fill="#555"/></svg>
<svg class="a" style="left:920px;top:85px" width="19" height="19" viewBox="0 0 19 19"><circle cx="9.5" cy="9.5" r="8.6" fill="none" stroke="#555" stroke-width="1.5"/><path d="M9.5 15V4.5M5.5 8.5l4-4 4 4" fill="none" stroke="#555" stroke-width="1.6"/></svg>
<svg class="a" style="left:957px;top:85px" width="19" height="19" viewBox="0 0 19 19"><circle cx="9.5" cy="9.5" r="8.6" fill="none" stroke="#555" stroke-width="1.5"/><path d="M9.5 4v10.5M5.5 10.5l4 4 4-4" fill="none" stroke="#555" stroke-width="1.6"/></svg>
<div class="t" style="left:1001.0px;top:88.17px;font-size:10.2px;line-height:14px;color:#444;">117</div>
<div class="a" style="left:994px;top:105px;width:29px;height:1px;background:#d0d0d0"></div>
<div class="t" style="left:1028.7px;top:88.10px;font-size:10.4px;line-height:14px;color:#444;">/&nbsp; 246</div>
<div class="a" style="left:1070px;top:82px;width:1px;height:23px;background:#dadada"></div>
<div class="t" style="left:1094.4px;top:88.17px;font-size:10.2px;line-height:14px;color:#444;">73%</div>
<svg class="a" style="left:1127px;top:92px" width="7" height="4"><path d="M0 0h7L3.5 4z" fill="#555"/></svg>
<div class="a" style="left:1088px;top:105px;width:52px;height:1px;background:#d0d0d0"></div>
<div class="a" style="left:1160px;top:92px;width:4px;height:4px;border-radius:50%;background:#555"></div>
<div class="a" style="left:1166px;top:92px;width:4px;height:4px;border-radius:50%;background:#555"></div>
<div class="a" style="left:1172px;top:92px;width:4px;height:4px;border-radius:50%;background:#555"></div>
<div class="a" style="left:1231px;top:81px;width:114px;height:27px;border-radius:14px;background:#2a7de6"></div>
<svg class="a" style="left:1244px;top:86px" width="17" height="17" viewBox="0 0 17 17"><circle cx="6.5" cy="4.5" r="3.5" fill="#fff"/><path d="M0.5 15c0-4 2.5-6.5 6-6.5 1.2 0 2.3 0.3 3.2 0.9V15z" fill="#fff"/><circle cx="12" cy="12" r="4.5" fill="#2a7de6"/><circle cx="12" cy="12" r="3.8" fill="#fff"/><path d="M12 9.8v4.4M9.8 12h4.4" stroke="#2a7de6" stroke-width="1.2"/></svg>
<div class="t" style="left:1267.0px;top:86.86px;font-size:13.4px;line-height:16px;color:#fff;font-weight:bold;">Compartir</div>
<div class="a" style="left:683px;top:114px;width:18px;height:618px;background:#efefef"></div>
<svg class="a" style="left:689px;top:418px" width="5" height="9"><path d="M0 0l5 4.5L0 9z" fill="#666"/></svg>
<div class="a" style="left:1283px;top:114px;width:1px;height:618px;background:#c8c8c8"></div>
<div class="a" style="left:1284px;top:114px;width:15px;height:618px;background:#f4f4f4"></div>
<svg class="a" style="left:1288px;top:119px" width="8" height="5" viewBox="0 0 8 5"><path d="M0.7 4.5L4 1l3.3 3.5" fill="none" stroke="#333" stroke-width="1.4"/></svg>
<svg class="a" style="left:1288px;top:721px" width="8" height="5" viewBox="0 0 8 5"><path d="M0.7 0.5L4 4l3.3-3.5" fill="none" stroke="#333" stroke-width="1.4"/></svg>
<div class="a" style="left:1286px;top:389px;width:12px;height:14px;background:#c2c2c2"></div>
<div class="a" style="left:1299px;top:114px;width:20px;height:618px;background:#efefef"></div>
<svg class="a" style="left:1306px;top:417px" width="5" height="9"><path d="M5 0L0 4.5 5 9z" fill="#666"/></svg>
<div class="a" style="left:1318px;top:114px;width:1px;height:618px;background:#d0d0d0"></div>
<svg class="a" style="left:1330px;top:126px" width="18" height="18" viewBox="0 0 18 18"><circle cx="7.5" cy="7.5" r="6.3" fill="none" stroke="#555" stroke-width="1.6"/><path d="M12 12l5 5" stroke="#555" stroke-width="2"/><path d="M6.3 5v5L4 7.5z M8.7 5v5L11 7.5z" fill="#555"/></svg>
<div class="a" style="left:1327px;top:154px;width:23px;height:1px;background:#ccc"></div>
<svg class="a" style="left:1330px;top:164px" width="20" height="21" viewBox="0 0 20 21"><path d="M1 1h8l4 4v13H1z" fill="none" stroke="#1a9aa0" stroke-width="1.4"/><path d="M4 12c1-2 1.5-4 1.8-6 0.4 2 1.3 3.5 3.5 4.5" fill="none" stroke="#1a9aa0"/><circle cx="14.5" cy="15.5" r="5" fill="#1a9aa0"/><path d="M12 15.5h5M15 13.3l2 2.2-2 2.2" fill="none" stroke="#fff" stroke-width="1.4"/></svg>
<svg class="a" style="left:1330px;top:204px" width="20" height="21" viewBox="0 0 20 21"><path d="M1 1h8l4 4v13H1z" fill="none" stroke="#d8323c" stroke-width="1.4"/><path d="M4 12c1-2 1.5-4 1.8-6 0.4 2 1.3 3.5 3.5 4.5" fill="none" stroke="#d8323c"/><circle cx="14.5" cy="15.5" r="5" fill="#d8323c"/><path d="M12 15.5h5M14.5 13v5" stroke="#fff" stroke-width="1.4"/></svg>
<svg class="a" style="left:1329px;top:243px" width="20" height="19" viewBox="0 0 20 19"><rect x="1" y="1" width="18" height="7" fill="#e6d6f0" stroke="#d6308a" stroke-width="1.4"/><rect x="1" y="11" width="8" height="7" fill="#e6d6f0" stroke="#d6308a" stroke-width="1.4"/><path d="M11.5 12h8M11.5 15h8M11.5 18h8" stroke="#d6308a" stroke-width="1.2"/></svg>
<svg class="a" style="left:1329px;top:283px" width="19" height="19" viewBox="0 0 19 19"><path d="M2 1h15a1.5 1.5 0 0 1 1.5 1.5V12a1.5 1.5 0 0 1-1.5 1.5H8l-4 4v-4H2A1.5 1.5 0 0 1 0.5 12V2.5A1.5 1.5 0 0 1 2 1z" fill="#efbf2e"/><path d="M4 5.5h11M4 8.5h8" stroke="#fff" stroke-width="1.4"/></svg>
<svg class="a" style="left:1328px;top:321px" width="21" height="21" viewBox="0 0 21 21"><path d="M1 1h8l3 3v8H1z" fill="#fff" stroke="#5a5af0" stroke-width="1.5"/><path d="M3.5 9c0.8-1.6 1.2-3 1.4-4.4 0.3 1.5 1 2.6 2.7 3.3" fill="none" stroke="#5a5af0" stroke-width="0.9"/><path d="M11 1h6l3 3v9h-9z" fill="#5a5af0"/><path d="M10 11v5" stroke="#5a5af0" stroke-width="2"/><path d="M5.5 15h9L10 20z" fill="#5a5af0"/></svg>
<svg class="a" style="left:1330px;top:361px" width="19" height="18" viewBox="0 0 19 18"><rect x="11" y="1" width="7" height="16" fill="#e8f6d8" stroke="#6ccb2a" stroke-width="1.6"/><path d="M1 8h7M1 8v9h7M8 17v-9" fill="none" stroke="#6ccb2a" stroke-width="1.6" stroke-dasharray="2 1.6"/><path d="M9 1L2.5 6.5M2 2v5h5" fill="none" stroke="#6ccb2a" stroke-width="1.7"/></svg>
<svg class="a" style="left:1329px;top:400px" width="20" height="17" viewBox="0 0 20 17"><path d="M4 13L14 3a2 2 0 0 1 3 3L8 15z" fill="#e6d6f0" stroke="#e0307a" stroke-width="2" stroke-linejoin="round"/><path d="M0.5 16.5L4 12.5 8 16.5z" fill="#e0307a"/><rect x="10" y="11.5" width="9" height="5" fill="#e0307a"/></svg>
<svg class="a" style="left:1330px;top:437px" width="17" height="21" viewBox="0 0 17 21"><path d="M8.5 1L1.2 3.8v6c0 5 3.3 8.6 7.3 10.2 4-1.6 7.3-5.2 7.3-10.2v-6z" fill="#e3e3f8" stroke="#4b60d0" stroke-width="1.5"/><path d="M8.5 2.5v16" stroke="#4b60d0" stroke-width="0.8"/></svg>
<svg class="a" style="left:1328px;top:478px" width="21" height="19" viewBox="0 0 21 19"><path d="M3 1h15v17H3z" fill="none" stroke="#1ba6a6" stroke-width="1.4"/><path d="M0.5 7l2.5 2.5L0.5 12M20.5 7l-2.5 2.5 2.5 2.5" fill="none" stroke="#1ba6a6" stroke-width="1.4"/><path d="M7 13c1-2 1.8-4.5 2.5-7 0.5 2 1.5 4.5 4 5.5-2.5 0-4.5 0.5-6.5 1.5z" fill="none" stroke="#1ba6a6"/></svg>
<svg class="a" style="left:1329px;top:518px" width="20" height="19" viewBox="0 0 20 19"><path d="M2 17l1-5L13 2a2 2 0 0 1 3 3L6 15z" fill="#efe6fa" stroke="#8a3fd8" stroke-width="1.8" stroke-linejoin="round"/><path d="M9 17c1.5-2 2.5-2 2.5 0s1.5 1 2.5-1c0.5 1.5 2 1.5 3.5 0.5" fill="none" stroke="#8a3fd8" stroke-width="1.6"/></svg>
<svg class="a" style="left:1330px;top:556px" width="19" height="20" viewBox="0 0 19 20"><path d="M1 1h8l4 4v13H1z" fill="#f6e6a0" stroke="#e8b41a" stroke-width="1.4"/><path d="M3.5 11c0.8-1.6 1.2-3.2 1.4-4.6 0.3 1.6 1 2.8 2.7 3.5" fill="none" stroke="#e8b41a"/><rect x="9" y="10" width="9" height="6" fill="#e8b41a"/><path d="M11 16l-1 3 3-3" fill="#e8b41a"/></svg>
<svg class="a" style="left:1330px;top:597px" width="19" height="19" viewBox="0 0 19 19"><path d="M2.5 15.5L9 9" stroke="#666" stroke-width="3" stroke-linecap="round"/><path d="M12.5 1.5a4.5 4.5 0 0 0-4 6l2.5 2.5a4.5 4.5 0 0 0 6-4l-2.5 1-2-2z" fill="#666"/><circle cx="14" cy="14" r="4.5" fill="#666"/><path d="M14 11.5v5M11.5 14h5" stroke="#fafafa" stroke-width="1.5"/></svg>
<div class="a" style="left:1326px;top:691px;width:23px;height:1px;background:#ccc"></div>
<svg class="a" style="left:1332px;top:703px" width="15" height="15" viewBox="0 0 15 15"><path d="M1 1v13" stroke="#666" stroke-width="1.4"/><path d="M4 7.5h9M10 4.5l3 3-3 3" fill="none" stroke="#666" stroke-width="1.4"/></svg>
<div class="a" style="left:701px;top:115px;width:582px;height:617px;background:#fcfcfc;overflow:hidden"><div style="position:absolute;left:-701px;top:-115px">
<div class="a" style="left:1161px;top:82px;width:44px;height:44px;border-radius:50%;border:3px solid #111;background:#fff"></div>
<div class="t" style="left:1172px;top:113px;font-size:5px;line-height:5px;font-weight:bold;color:#333;letter-spacing:0.5px">''I‹I‹'‹I</div>
<div class="t" style="left:784px;width:400px;text-align:center;top:115.12px;font-size:8.3px;line-height:11px;font-weight:bold;color:#111">CÓDIGO DANE 173001012926</div>
<div class="t" style="left:784px;width:400px;text-align:center;top:126.12px;font-size:8.3px;line-height:11px;font-weight:bold;color:#111">CÓDIGO ICFES 727057</div>
<div class="t" style="left:784px;width:400px;text-align:center;top:138.02px;font-size:8.3px;line-height:11px;font-weight:bold;color:#111">LICENCIA DE FUNCIONAMIENTO 71000044 del 18 enero 2012</div>
<div class="t" style="left:784px;width:400px;text-align:center;top:149.02px;font-size:8.3px;line-height:11px;font-weight:bold;color:#111">RESOLUCIÓN 002413 de 1 de septiembre de 2017</div>
<div class="a" style="left:755.5px;top:159.5px;width:47.10000000000002px;height:540.2px;background:#dddddd"></div>
<div class="a" style="left:802.6px;top:159.5px;width:424.4px;height:36.099999999999994px;background:#dddddd"></div>
<div class="a" style="left:755.0px;top:159.5px;width:1.0px;height:540.8px;background:#222"></div>
<div class="a" style="left:802.1px;top:159.5px;width:1.0px;height:540.8px;background:#222"></div>
<div class="a" style="left:890.1px;top:159.5px;width:1.0px;height:540.8px;background:#222"></div>
<div class="a" style="left:1139.5px;top:159.5px;width:1.0px;height:540.8px;background:#222"></div>
<div class="a" style="left:1226.5px;top:159.5px;width:1.0px;height:540.8px;background:#222"></div>
<div class="a" style="left:755.5px;top:159.0px;width:471.5px;height:1.0px;background:#222"></div>
<div class="a" style="left:802.6px;top:195.1px;width:424.4px;height:1.0px;background:#222"></div>
<div class="a" style="left:802.6px;top:292.8px;width:424.4px;height:1.0px;background:#222"></div>
<div class="a" style="left:802.6px;top:364.9px;width:424.4px;height:1.0px;background:#222"></div>
<div class="a" style="left:802.6px;top:413.3px;width:424.4px;height:1.0px;background:#222"></div>
<div class="a" style="left:802.6px;top:498.3px;width:424.4px;height:1.0px;background:#222"></div>
<div class="a" style="left:802.6px;top:650.8px;width:424.4px;height:1.0px;background:#222"></div>
<div class="a" style="left:755.5px;top:699.2px;width:472.1px;height:1.0px;background:#222"></div>
<div class="t" style="left:779px;top:428px;width:0;height:0"><div style="position:absolute;left:0;top:0;transform:translate(-50%,-50%) rotate(-90deg);font-size:10.45px;line-height:12px;color:#111;white-space:nowrap">Recursos para desarrollar el aprendizaje de manera asincrónica</div></div>
<div class="t" style="left:786.6px;width:120px;text-align:center;top:160.98px;font-size:10.45px;line-height:12px;color:#111;font-weight:bold;">Herramientas</div>
<div class="t" style="left:786.6px;width:120px;text-align:center;top:172.88px;font-size:10.45px;line-height:12px;color:#111;font-weight:bold;">usadas por la</div>
<div class="t" style="left:786.6px;width:120px;text-align:center;top:184.78px;font-size:10.45px;line-height:12px;color:#111;font-weight:bold;">institución</div>
<div class="t" style="left:955.3px;width:120px;text-align:center;top:172.38px;font-size:10.45px;line-height:12px;color:#111;font-weight:bold;">Uso pedagógico</div>
<div class="t" style="left:1123.5px;width:120px;text-align:center;top:160.98px;font-size:10.45px;line-height:12px;color:#111;font-weight:bold;">Grado y curso</div>
<div class="t" style="left:1123.5px;width:120px;text-align:center;top:172.88px;font-size:10.45px;line-height:12px;color:#111;font-weight:bold;">donde se</div>
<div class="t" style="left:1123.5px;width:120px;text-align:center;top:184.78px;font-size:10.45px;line-height:12px;color:#111;font-weight:bold;">utiliza</div>
<div class="t" style="left:786.6px;width:120px;text-align:center;top:233.88px;font-size:10.45px;line-height:12px;color:#111;font-weight:bold;">Correo</div>
<div class="t" style="left:786.6px;width:120px;text-align:center;top:245.88px;font-size:10.45px;line-height:12px;color:#111;font-weight:bold;">electrónico</div>
<div class="t" style="left:786.6px;width:120px;text-align:center;top:306.38px;font-size:10.45px;line-height:12px;color:#111;font-weight:bold;">Redes</div>
<div class="t" style="left:786.6px;width:120px;text-align:center;top:318.38px;font-size:10.45px;line-height:12px;color:#111;font-weight:bold;">sociales:</div>
<div class="t" style="left:786.6px;width:120px;text-align:center;top:330.38px;font-size:10.45px;line-height:12px;color:#111;font-weight:bold;">Facebook, Twit</div>
<div class="t" style="left:786.6px;width:120px;text-align:center;top:342.38px;font-size:10.45px;line-height:12px;color:#111;font-weight:bold;">ter,Youtube</div>
<div class="t" style="left:786.6px;width:120px;text-align:center;top:383.68px;font-size:10.45px;line-height:12px;color:#111;font-weight:bold;">Podcast</div>
<div class="t" style="left:786.6px;width:120px;text-align:center;top:450.38px;font-size:10.45px;line-height:12px;color:#111;font-weight:bold;">Blogs</div>
<div class="t" style="left:786.6px;width:120px;text-align:center;top:563.88px;font-size:10.45px;line-height:12px;color:#111;font-weight:bold;">Moodle,</div>
<div class="t" style="left:786.6px;width:120px;text-align:center;top:575.88px;font-size:10.45px;line-height:12px;color:#111;font-weight:bold;">Clasroom</div>
<div class="t" style="left:786.6px;width:120px;text-align:center;top:663.88px;font-size:10.45px;line-height:12px;color:#111;font-weight:bold;">WhatsApp</div>
<div class="t" style="left:895.3px;top:198.18px;font-size:10.45px;line-height:12px;color:#111;width:238.7px;text-align:justify;text-align-last:justify;--k:'895.3|206.8';">Herramienta poco utilizada pues no requiere</div>
<div class="t" style="left:895.3px;top:210.13px;font-size:10.45px;line-height:12px;color:#111;width:238.7px;text-align:justify;text-align-last:justify;--k:'895.3|218.8';">grandes recursos computacionales ni de conexión.</div>
<div class="t" style="left:895.3px;top:222.08px;font-size:10.45px;line-height:12px;color:#111;width:238.7px;text-align:justify;text-align-last:justify;--k:'895.3|230.7';">Mediante el correo se distribuyen y recepcionan</div>
<div class="t" style="left:895.3px;top:234.03px;font-size:10.45px;line-height:12px;color:#111;width:238.7px;text-align:justify;text-align-last:justify;--k:'895.3|242.7';">actividades de aprendizaje participativo-</div>
<div class="t" style="left:895.3px;top:245.98px;font-size:10.45px;line-height:12px;color:#111;width:238.7px;text-align:justify;text-align-last:justify;--k:'895.3|254.6';">colaborativo al permitir la interacción directa entre</div>
<div class="t" style="left:895.3px;top:257.93px;font-size:10.45px;line-height:12px;color:#111;width:238.7px;">los diferentes miembros del grupo.</div>
<div class="t" style="left:1144.7px;top:198.18px;font-size:10.45px;line-height:12px;color:#111;width:77.5px;">Grado 6, se</div>
<div class="t" style="left:1144.7px;top:210.13px;font-size:10.45px;line-height:12px;color:#111;width:77.5px;">comunican 2</div>
<div class="t" style="left:1144.7px;top:222.08px;font-size:10.45px;line-height:12px;color:#111;width:77.5px;">estudiantes</div>
<div class="t" style="left:895.3px;top:294.18px;font-size:10.45px;line-height:12px;color:#111;width:238.7px;text-align:justify;text-align-last:justify;--k:'895.3|302.8';">Se utilizan para compartir contenido de interés y</div>
<div class="t" style="left:895.3px;top:306.13px;font-size:10.45px;line-height:12px;color:#111;width:238.7px;text-align:justify;text-align-last:justify;--k:'895.3|314.8';">promover la participación y comentarios del</div>
<div class="t" style="left:895.3px;top:318.08px;font-size:10.45px;line-height:12px;color:#111;width:238.7px;text-align:justify;text-align-last:justify;--k:'895.3|326.7';">estudiantado frente a las diferentes publicaciones.</div>
<div class="t" style="left:895.3px;top:330.03px;font-size:10.45px;line-height:12px;color:#111;width:238.7px;text-align:justify;text-align-last:justify;--k:'895.3|338.6';">Asimismo, se usan como mecanismos para la</div>
<div class="t" style="left:895.3px;top:341.98px;font-size:10.45px;line-height:12px;color:#111;width:238.7px;">motivación y acompañamiento de las personas</div>
<div class="t" style="left:1144.7px;top:294.18px;font-size:10.45px;line-height:12px;color:#111;width:77.5px;text-align:justify;text-align-last:justify;--k:'1144.7|302.8';">&nbsp;En diferentes</div>
<div class="t" style="left:1144.7px;top:306.13px;font-size:10.45px;line-height:12px;color:#111;width:77.5px;text-align:justify;text-align-last:justify;--k:'1144.7|314.8';">grados según</div>
<div class="t" style="left:1144.7px;top:318.08px;font-size:10.45px;line-height:12px;color:#111;width:77.5px;text-align:justify;text-align-last:justify;--k:'1144.7|326.7';">planeación y</div>
<div class="t" style="left:1144.7px;top:330.03px;font-size:10.45px;line-height:12px;color:#111;width:77.5px;">necesidad</div>
<div class="t" style="left:895.3px;top:366.68px;font-size:10.45px;line-height:12px;color:#111;width:238.7px;text-align:justify;text-align-last:justify;--k:'895.3|375.3';">Son audios que se utilizan para transmitir</div>
<div class="t" style="left:895.3px;top:378.63px;font-size:10.45px;line-height:12px;color:#111;width:238.7px;">explicaciones breves.</div>
<div class="t" style="left:1144.7px;top:366.68px;font-size:10.45px;line-height:12px;color:#111;width:77.5px;text-align:justify;text-align-last:justify;--k:'1144.7|375.3';">En diferentes</div>
<div class="t" style="left:1144.7px;top:378.63px;font-size:10.45px;line-height:12px;color:#111;width:77.5px;text-align:justify;text-align-last:justify;--k:'1144.7|387.2';">grados según</div>
<div class="t" style="left:1144.7px;top:390.58px;font-size:10.45px;line-height:12px;color:#111;width:77.5px;text-align:justify;text-align-last:justify;--k:'1144.7|399.2';">planeación y</div>
<div class="t" style="left:1144.7px;top:402.53px;font-size:10.45px;line-height:12px;color:#111;width:77.5px;">necesidad</div>
<div class="t" style="left:895.3px;top:415.18px;font-size:10.45px;line-height:12px;color:#111;width:240.8px;transform-origin:0 0;transform:scaleX(0.9912);text-align:justify;text-align-last:justify;--k:'895.3|423.8';">Sitio donde se van publicando cronológicamente las</div>
<div class="t" style="left:895.3px;top:427.13px;font-size:10.45px;line-height:12px;color:#111;width:238.7px;text-align:justify;text-align-last:justify;--k:'895.3|435.8';">actividades que debe desarrollar el estudiantado.</div>
<div class="t" style="left:895.3px;top:439.08px;font-size:10.45px;line-height:12px;color:#111;width:238.7px;text-align:justify;text-align-last:justify;--k:'895.3|447.7';">Asimismo, permite la interacción a través de</div>
<div class="t" style="left:895.3px;top:451.03px;font-size:10.45px;line-height:12px;color:#111;width:238.7px;text-align:justify;text-align-last:justify;--k:'895.3|459.6';">comentarios del alumnado y en algunos casos es</div>
<div class="t" style="left:895.3px;top:462.98px;font-size:10.45px;line-height:12px;color:#111;width:238.7px;">usada como portafolio de actividades.</div>
<div class="t" style="left:1144.7px;top:415.18px;font-size:10.45px;line-height:12px;color:#111;width:77.5px;text-align:justify;text-align-last:justify;--k:'1144.7|423.8';">Grado decimo y</div>
<div class="t" style="left:1144.7px;top:427.13px;font-size:10.45px;line-height:12px;color:#111;width:77.5px;text-align:justify;text-align-last:justify;--k:'1144.7|435.8';">de acuerdo a la</div>
<div class="t" style="left:1144.7px;top:439.08px;font-size:10.45px;line-height:12px;color:#111;width:77.5px;">necesidad</div>
<div class="t" style="left:895.3px;top:499.78px;font-size:10.45px;line-height:12px;color:#111;width:238.7px;text-align:justify;text-align-last:justify;--k:'895.3|508.4';">Son herramientas que permiten gestionar un aula</div>
<div class="t" style="left:895.3px;top:511.73px;font-size:10.45px;line-height:12px;color:#111;width:238.7px;text-align:justify;text-align-last:justify;--k:'895.3|520.4';">de clase virtual de forma colaborativa a través de</div>
<div class="t" style="left:895.3px;top:523.68px;font-size:10.45px;line-height:12px;color:#111;width:238.7px;text-align:justify;text-align-last:justify;--k:'895.3|532.3';">Internet, posibilita la creación de documentos,</div>
<div class="t" style="left:895.3px;top:535.63px;font-size:10.45px;line-height:12px;color:#111;width:238.7px;text-align:justify;text-align-last:justify;--k:'895.3|544.2';">compartir información en diferentes formatos,</div>
<div class="t" style="left:895.3px;top:547.58px;font-size:10.45px;line-height:12px;color:#111;width:238.7px;text-align:justify;text-align-last:justify;--k:'895.3|556.2';">organizar reuniones y realizarlas. El estudiante con</div>
<div class="t" style="left:895.3px;top:559.53px;font-size:10.45px;line-height:12px;color:#111;width:239.6px;transform-origin:0 0;transform:scaleX(0.9961);text-align:justify;text-align-last:justify;--k:'895.3|568.2';">conexión a internet a través de cualquier dispositivo</div>
<div class="t" style="left:895.3px;top:571.48px;font-size:10.45px;line-height:12px;color:#111;width:238.7px;text-align:justify;text-align-last:justify;--k:'895.3|580.1';">electrónico accede a las clases y los diseños</div>
<div class="t" style="left:895.3px;top:583.43px;font-size:10.45px;line-height:12px;color:#111;width:238.7px;">instruccionales elaborados por los docentes.</div>
<div class="t" style="left:1144.7px;top:499.78px;font-size:10.45px;line-height:12px;color:#111;width:77.5px;text-align:justify;text-align-last:justify;--k:'1144.7|508.4';">Moodle se usa</div>
<div class="t" style="left:1144.7px;top:511.73px;font-size:10.45px;line-height:12px;color:#111;width:77.5px;text-align:justify;text-align-last:justify;--k:'1144.7|520.4';">en educación</div>
<div class="t" style="left:1144.7px;top:523.68px;font-size:10.45px;line-height:12px;color:#111;width:77.5px;text-align:justify;text-align-last:justify;--k:'1144.7|532.3';">media, para</div>
<div class="t" style="left:1144.7px;top:535.63px;font-size:10.45px;line-height:12px;color:#111;width:77.5px;text-align:justify;text-align-last:justify;--k:'1144.7|544.2';">desarrollar los</div>
<div class="t" style="left:1144.7px;top:547.58px;font-size:10.45px;line-height:12px;color:#111;width:77.5px;text-align:justify;text-align-last:justify;--k:'1144.7|556.2';">encuentros de la</div>
<div class="t" style="left:1144.7px;top:559.53px;font-size:10.45px;line-height:12px;color:#111;width:77.5px;">especialidad(es)</div>
<div class="t" style="left:895.3px;top:652.68px;font-size:10.45px;line-height:12px;color:#111;width:238.7px;text-align:justify;text-align-last:justify;--k:'895.3|661.3';">La organización de grupos y subgrupos de</div>
<div class="t" style="left:895.3px;top:664.63px;font-size:10.45px;line-height:12px;color:#111;width:238.7px;text-align:justify;text-align-last:justify;--k:'895.3|673.2';">WhatsApp, ha permitido compartir el material</div>
<div class="t" style="left:895.3px;top:676.58px;font-size:10.45px;line-height:12px;color:#111;width:241.4px;transform-origin:0 0;transform:scaleX(0.9889);text-align:justify;text-align-last:justify;--k:'895.3|685.2';">pedagógico, organizar foros de discusión con temas</div>
<div class="t" style="left:895.3px;top:688.53px;font-size:10.45px;line-height:12px;color:#111;width:238.7px;text-align:justify;text-align-last:justify;--k:'895.3|697.1';">y subtemas, el docente comparte pequeños videos</div>
<div class="t" style="left:1144.7px;top:652.68px;font-size:10.45px;line-height:12px;color:#111;width:77.5px;text-align:justify;text-align-last:justify;--k:'1144.7|661.3';">Lo utilizan todos</div>
<div class="t" style="left:1144.7px;top:664.63px;font-size:10.45px;line-height:12px;color:#111;width:77.5px;text-align:justify;text-align-last:justify;--k:'1144.7|673.2';">los grados de</div>
<div class="t" style="left:1144.7px;top:676.58px;font-size:10.45px;line-height:12px;color:#111;width:77.5px;">manera</div>
<div class="t" style="left:1144.7px;top:688.53px;font-size:10.45px;line-height:12px;color:#111;width:77.5px;text-align:justify;text-align-last:justify;--k:'1144.7|697.1';">esporádica y</div>
<div class="a" style="left:753px;top:708px;width:462px;height:4px;background:#111"></div>
<div class="t" style="left:835px;width:300px;text-align:center;top:714.09px;font-size:8.4px;line-height:10px;font-weight:bold;font-style:italic;color:#111;transform:scaleX(0.8)">Calle 67 Cra 24 Brr Mirador De Ambalá</div>
<div class="t" style="left:835px;width:300px;text-align:center;top:722.59px;font-size:8.4px;line-height:10px;font-weight:bold;font-style:italic;color:#111;transform:scaleX(0.77)">E-Mail: <span style="color:#1a1aff;text-decoration:underline">bicentenario.tolima@feyalegria.org.co</span></div>
</div></div>
</div>

<!-- ================= TASKBAR ================= -->
<div id="taskbar" class="a">
<div style="position:absolute;left:0;top:-732px">
<div class="a" style="left:0;top:732px;width:1364px;height:33px;background:linear-gradient(90deg,#160d0f 0%,#1d1012 30%,#240e12 60%,#2a0f13 68%,#1c1719 75%,#141210 100%)"></div>
<div class="a" style="left:890px;top:732px;width:100px;height:16px;background:#2c0e12;border-radius:0 0 40% 10%"></div>
<div class="a" style="left:893px;top:748px;width:110px;height:17px;background:#242428;clip-path:polygon(0 0,100% 0,100% 100%,6% 100%)"></div>
<div class="a" style="left:1003px;top:732px;width:361px;height:33px;background:#171615"></div>
<div class="a" style="left:0;top:726px;width:680px;height:6px;background:#e8e8e8"></div>
<div class="t" style="left:270px;top:726px;font-size:7px;line-height:6px;color:#777;letter-spacing:2px;overflow:hidden;height:6px">ELACIÓN EN DERECHO INTEGRACIÓN</div>
<svg class="a" style="left:13px;top:742px" width="15" height="15" viewBox="0 0 15 15"><path d="M0 2l6-0.8v5.8H0z M7 1.1L15 0v7H7z M0 8h6v5.8L0 13z M7 8h8v7l-8-1.1z" fill="#fff"/></svg>
<svg class="a" style="left:54px;top:741px" width="15" height="16" viewBox="0 0 15 16"><circle cx="9" cy="6" r="5" fill="none" stroke="#fff" stroke-width="1.3"/><path d="M5.5 9.5L0.8 15" stroke="#fff" stroke-width="1.5"/></svg>
<svg class="a" style="left:93px;top:744px" width="18" height="11" viewBox="0 0 18 11"><rect x="4" y="0.7" width="10" height="9.6" fill="none" stroke="#fff" stroke-width="1.3"/><path d="M1 2v7M17 2v7" stroke="#fff" stroke-width="1.3"/></svg>
<svg class="a" style="left:136px;top:740px" width="19" height="17" viewBox="0 0 19 17"><path d="M0.5 1.5h6l2 2h10v13H0.5z" fill="#f2c14e"/><rect x="0.5" y="5" width="18" height="11.5" fill="#f6d77a"/><rect x="5" y="11" width="9" height="6" fill="#2a9be0"/></svg>
<svg class="a" style="left:177px;top:740px" width="20" height="18" viewBox="0 0 20 18"><rect x="8" y="1.5" width="11.5" height="15" fill="#fff" stroke="#1d7044"/><path d="M10 5h7M10 8h7M10 11h7M10 14h7M13 3v13" stroke="#1d7044" stroke-width="0.8"/><path d="M0 2l11-2v18L0 16z" fill="#1d7044"/><path d="M3 5l4 8M7 5l-4 8" stroke="#fff" stroke-width="1.6"/></svg>
<svg class="a" style="left:219px;top:740px" width="19" height="19" viewBox="0 0 19 19"><circle cx="9.5" cy="9.5" r="9" fill="#db4437"/><path d="M9.5 9.5L1.7 5A9 9 0 0 1 17.3 5z" fill="#db4437"/><path d="M9.5 9.5L17.3 5A9 9 0 0 1 9.5 18.5z" fill="#f4c20d"/><path d="M9.5 9.5V18.5A9 9 0 0 1 1.7 5z" fill="#0f9d58"/><circle cx="9.5" cy="9.5" r="4.2" fill="#fff"/><circle cx="9.5" cy="9.5" r="3.3" fill="#4285f4"/></svg>
<div class="a" style="left:212px;top:763px;width:34px;height:2px;background:#8ab4de"></div>
<svg class="a" style="left:260px;top:740px" width="21" height="18" viewBox="0 0 21 18"><rect x="8" y="1.5" width="12.5" height="15" fill="#fff" stroke="#d24625"/><path d="M11 5h6M11 8h6M11 11h6" stroke="#d24625" stroke-width="0.9"/><path d="M0 2l11-2v18L0 16z" fill="#d24625"/><path d="M3.5 13V4.5h2.5a2.2 2.2 0 0 1 0 4.4H3.5" fill="none" stroke="#fff" stroke-width="1.5"/></svg>
<div class="a" style="left:292px;top:732px;width:40px;height:33px;background:#3b2f31"></div>
<div class="a" style="left:292px;top:763px;width:40px;height:2px;background:#8ab4de"></div>
<svg class="a" style="left:302px;top:740px" width="20" height="18" viewBox="0 0 20 18"><rect x="8" y="1.5" width="11.5" height="15" fill="#fff" stroke="#2b579a"/><path d="M10 5h7M10 8h7M10 11h7M10 14h7" stroke="#2b579a" stroke-width="0.9"/><path d="M0 2l11-2v18L0 16z" fill="#2b579a"/><path d="M1.8 5l1.5 8 2.2-6 2.2 6 1.5-8" fill="none" stroke="#fff" stroke-width="1.2"/></svg>
<svg class="a" style="left:469px;top:739px" width="20" height="19" viewBox="0 0 20 19"><rect x="0" y="0" width="20" height="19" fill="#c4141a"/><path d="M4 15c2-3 3.5-7 4.5-11 0.5 3.5 3 7.5 7.5 8.5-4 0-8 0.8-12 2.5z" fill="none" stroke="#fff" stroke-width="1.2"/></svg>
<div class="a" style="left:462px;top:763px;width:35px;height:2px;background:#8ab4de"></div>
<svg class="a" style="left:1160px;top:745px" width="10" height="6" viewBox="0 0 10 6"><path d="M0.8 5.5L5 1l4.2 4.5" fill="none" stroke="#fff" stroke-width="1.3"/></svg>
<svg class="a" style="left:1184px;top:742px" width="16" height="14" viewBox="0 0 16 14"><path d="M1 5h3l4-4v12L4 9H1z" fill="none" stroke="#fff" stroke-width="1.2"/><path d="M10.5 4.5a3.5 3.5 0 0 1 0 5M12.5 2.5a6.5 6.5 0 0 1 0 9" fill="none" stroke="#fff" stroke-width="1.1"/></svg>
<svg class="a" style="left:1215px;top:742px" width="12" height="13" viewBox="0 0 12 13"><path d="M1 12.5a11 11 0 0 1 10.5-10.5M1 12.5a7 7 0 0 1 6.5-6.5M1 12.5a3 3 0 0 1 3-3" fill="none" stroke="#fff" stroke-width="1.3"/><path d="M9 9l3 3M12 9l-3 3" stroke="#fff"/></svg>
<svg class="a" style="left:1239px;top:741px" width="16" height="16" viewBox="0 0 16 16"><path d="M0.7 0.7h14.6v11H6l-3.5 3.5v-3.5H0.7z" fill="#fff"/><path d="M3.5 4h9M3.5 7h9" stroke="#1c1113" stroke-width="1.2"/></svg>
<svg class="a" style="left:1266px;top:743px" width="22" height="12" viewBox="0 0 22 12"><rect x="0.6" y="0.6" width="20.8" height="10.8" fill="none" stroke="#fff" stroke-width="1.2"/><path d="M3 3.5h2M6.5 3.5h2M10 3.5h2M13.5 3.5h2M17 3.5h2M3 6h2M6.5 6h2M10 6h2M13.5 6h2M17 6h2M5 8.5h12" stroke="#fff"/></svg>
<div class="t" style="left:1305.4px;top:736.03px;font-size:10px;line-height:13px;color:#fff;">4:07 p. m.</div>
<div class="t" style="left:1303.0px;top:750.07px;font-size:9.9px;line-height:13px;color:#fff;">12/07/2020</div>
</div></div>

</body></html>
